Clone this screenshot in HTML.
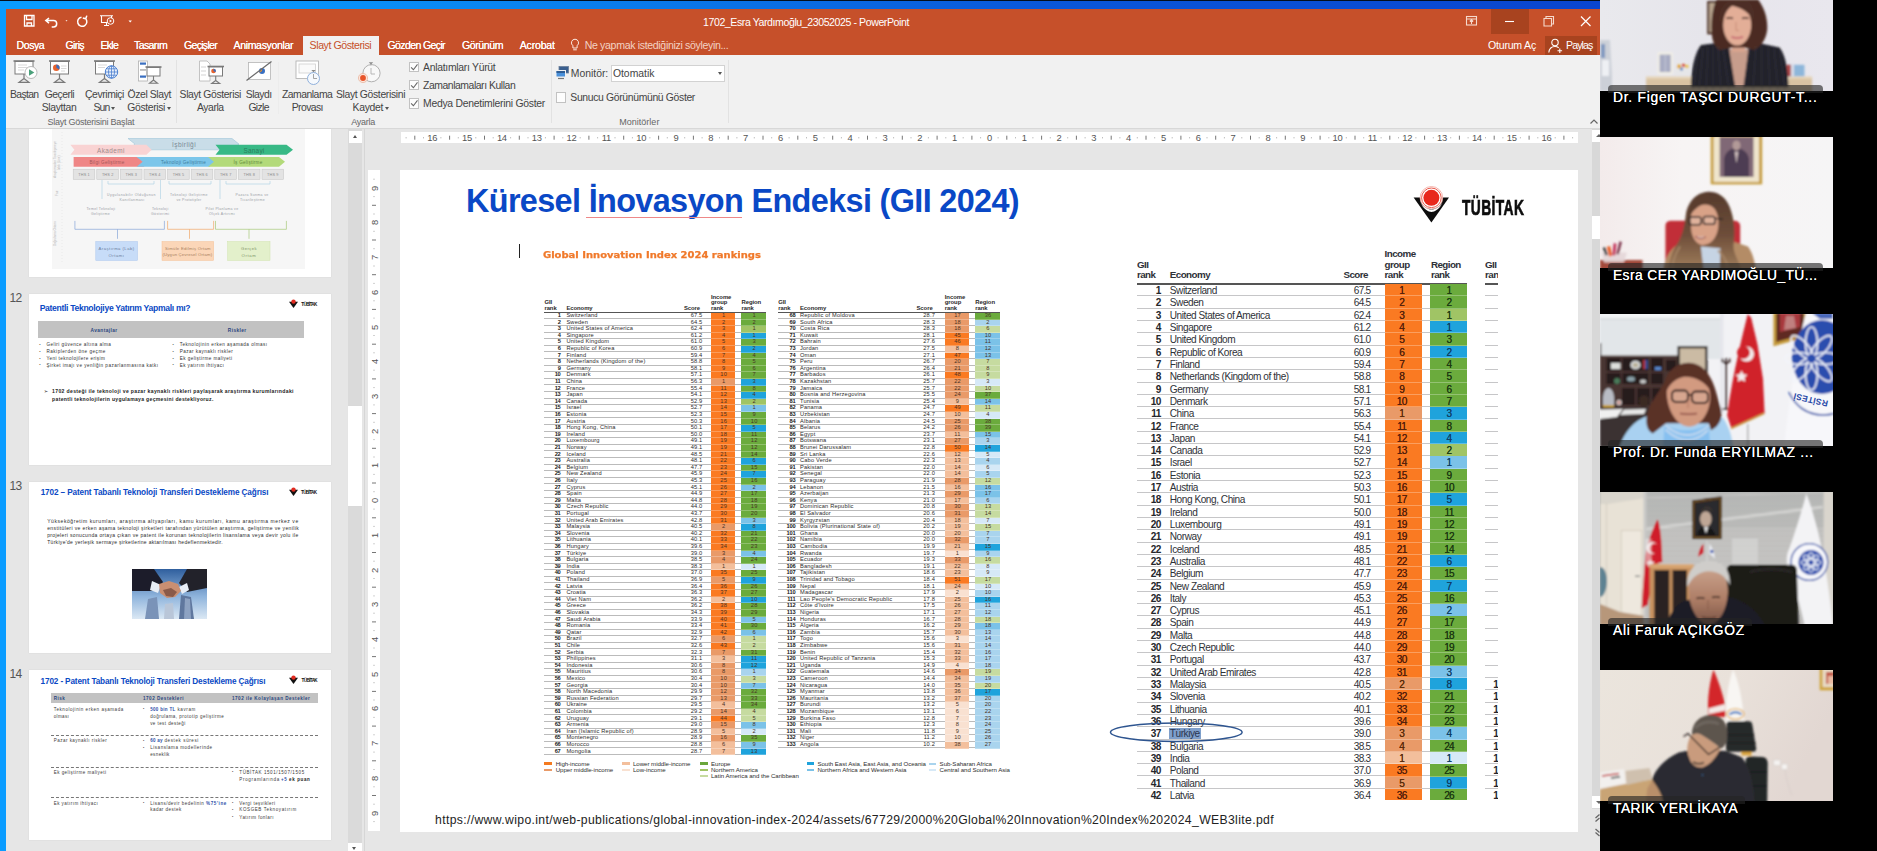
<!DOCTYPE html>
<html lang="tr"><head><meta charset="utf-8"><title>1702_Esra Yardımoğlu_23052025 - PowerPoint</title>
<style>
html,body{margin:0;padding:0}
body{width:1877px;height:851px;overflow:hidden;background:#e6e6e6;position:relative;font-family:"Liberation Sans",sans-serif;}
#root{position:absolute;left:0;top:0;width:1877px;height:851px;overflow:hidden;background:#e6e6e6}
#root div,#root span,#root svg,#root b,#root i{position:absolute;white-space:nowrap}
#root svg{overflow:visible}
#root svg text{white-space:pre}
.st p,.bt p{position:absolute;left:0;right:0;margin:0;box-sizing:border-box}
.st p{height:6.6px;border-bottom:0.7px solid rgba(120,120,120,.5);font-size:5.7px;line-height:5.8px;color:#2b2b2b;letter-spacing:0.17px}
.st p b{color:#1a1a1a;letter-spacing:-0.2px}
.st p *,.bt p *{position:absolute;top:0;white-space:nowrap;text-decoration:none}
.st u{width:24.4px;height:6.7px;border-bottom:0.6px solid rgba(255,255,255,.25);text-align:center;color:#4a3326;padding-left:1px;box-sizing:border-box}
#root .sh{font-size:5.9px;line-height:6px;color:#2a2a2a;letter-spacing:-0.05px}
#root .hl{left:0;right:0;height:0.9px;background:#555}
.bt p{height:12.31px;border-bottom:1.1px solid rgba(120,120,125,.42);font-size:10.1px;line-height:13.9px;color:#2f3238;letter-spacing:-0.46px}
.bt p span+span{letter-spacing:-0.8px}
.bt p b{color:#24262b;letter-spacing:-0.7px}
.bt u{width:37.3px;height:12.4px;box-sizing:border-box;border-bottom:1.1px solid rgba(255,255,255,.28);text-shadow:0 0 .35px currentColor;text-align:center;color:#5a2a08;letter-spacing:-0.7px}
.bt u.EUR,.bt u.NAC,.bt u.LCN{color:#1d3a12}.bt u.SEAO,.bt u.NAWA,.bt u.SSF,.bt u.CSA{color:#0f3f66}
.bt mark{position:static !important;background:#7f9fcb;color:#2a3550;padding:0 1.2px 0 0.5px;margin-left:-0.5px}
#root .bh{font-size:9.8px;line-height:12px;color:#2e3138;letter-spacing:-0.55px}
.bt u.HI,.bt u.UM,.bt u.LM,.bt u.LI{padding-right:3px}.bt u.HI{color:#54200a}
.HI{background:#fa7a22}.UM{background:#e99a68}.LM{background:#f3bf9c}.LI{background:#f9e1d1}
.EUR{background:#6bab3d}.NAC{background:#a0c465}.LCN{background:#c6dba0}.SEAO{background:#1fa3dc}.NAWA{background:#7bc2e8}.SSF{background:#a9d4ee}.CSA{background:#d6e9f7}
</style></head>
<body><div id="root">
<!-- chrome -->
<div style="left:0.0px;top:0.0px;width:1600.0px;height:9.0px;background:linear-gradient(90deg,#0a9cff 0%,#0a9cff 12%,#0a7aea 40%,#0a57d9 65%,#0a45cf 100%);"></div>
<div style="left:0.0px;top:0.0px;width:6.0px;height:851.0px;background:#0a9cff;"></div>
<div style="left:0.0px;top:0.0px;width:1600.0px;height:1.2px;background:#05101e;"></div>
<div style="left:6.0px;top:8.5px;width:1594.0px;height:46.0px;background:#c6502a;"></div>
<svg style="left:20px;top:12px" width="120" height="20" viewBox="0 0 120 20" fill="none" stroke="#fff" stroke-width="1.3">
<path d="M4.5 3.5h9.5v10.5h-9.5z M6.5 3.5v4h5.5v-4 M7 14v-3h4.5v3" />
<path d="M29 6l-3.2 2.6 3.2 2.6 M26 8.6h7.5a3.2 3.2 0 0 1 0 6.4h-1.8" stroke-width="1.5"/>
<path d="M45.5 8.2h2l-1 1.2z" fill="#fff" stroke="none"/>
<path d="M61.5 5.2a4.6 4.6 0 1 0 4 1.3 M66.8 3.6l-1 3.2-3-0.8" stroke-width="1.5"/>
<path d="M80 3.8h13 M81.5 4v6.5h10v-6.5 M86.5 10.5v2.5 M84 13.5h5" stroke-width="1.1"/>
<circle cx="90.5" cy="9" r="3.3" fill="#c6502a" stroke-width="1"/><path d="M89.6 7.5l2.4 1.5-2.4 1.5z" fill="#fff" stroke="none"/>
<path d="M108.5 8.6h3.4l-1.7 1.9z" fill="#fff" stroke="none"/>
</svg>
<span style="left:703.0px;top:15.8px;font-size:10.6px;line-height:12.7px;color:#fff;letter-spacing:-0.43px;">1702_Esra Yardımoğlu_23052025 - PowerPoint</span>
<div style="left:1491.0px;top:8.5px;width:38.0px;height:25.0px;background:#a8431f;"></div>
<svg style="left:1460px;top:10px" width="140" height="24" viewBox="0 0 140 24" fill="none" stroke="#f6d9cc" stroke-width="1.1">
<rect x="6.500" y="6.500" width="10" height="8.500"/><path d="M6.500 9h10 M11.500 14v-4 M9.800 11.500l1.700-1.700 1.700 1.700"/>
<path d="M45 11.500h9" stroke="#fff"/>
<path d="M84 8.500h7.500v7.500h-7.500z M86 8.500v-2h7.500v7.500h-2"/>
<path d="M121 6.500l9.500 9.500 M130.500 6.500l-9.500 9.500" stroke="#fff" stroke-width="1.2"/>
</svg>
<span style="left:16.6px;top:39.2px;font-size:10.6px;line-height:12.7px;color:#fff;letter-spacing:-0.47px;text-shadow:0 0 0.400px #fff;">Dosya</span>
<span style="left:65.5px;top:39.2px;font-size:10.6px;line-height:12.7px;color:#fff;letter-spacing:-0.66px;text-shadow:0 0 0.400px #fff;">Giriş</span>
<span style="left:100.6px;top:39.2px;font-size:10.6px;line-height:12.7px;color:#fff;letter-spacing:-0.80px;text-shadow:0 0 0.400px #fff;">Ekle</span>
<span style="left:134.0px;top:39.2px;font-size:10.6px;line-height:12.7px;color:#fff;letter-spacing:-0.63px;text-shadow:0 0 0.400px #fff;">Tasarım</span>
<span style="left:184.0px;top:39.2px;font-size:10.6px;line-height:12.7px;color:#fff;letter-spacing:-0.73px;text-shadow:0 0 0.400px #fff;">Geçişler</span>
<span style="left:233.5px;top:39.2px;font-size:10.6px;line-height:12.7px;color:#fff;letter-spacing:-0.38px;text-shadow:0 0 0.400px #fff;">Animasyonlar</span>
<div style="left:302.5px;top:35.5px;width:76.5px;height:19.5px;background:#f1f1f1;"></div>
<span style="left:309.6px;top:39.2px;font-size:10.6px;line-height:12.7px;color:#c6502a;letter-spacing:-0.44px;">Slayt Gösterisi</span>
<span style="left:387.5px;top:39.2px;font-size:10.6px;line-height:12.7px;color:#fff;letter-spacing:-0.66px;text-shadow:0 0 0.400px #fff;">Gözden Geçir</span>
<span style="left:462.0px;top:39.2px;font-size:10.6px;line-height:12.7px;color:#fff;letter-spacing:-0.45px;text-shadow:0 0 0.400px #fff;">Görünüm</span>
<span style="left:519.7px;top:39.2px;font-size:10.6px;line-height:12.7px;color:#fff;letter-spacing:-0.20px;text-shadow:0 0 0.400px #fff;">Acrobat</span>
<svg style="left:568px;top:37px" width="14" height="17" viewBox="0 0 14 17" fill="none" stroke="#fbe9e1" stroke-width="1"><path d="M7 2.200a3.600 3.600 0 0 1 2.100 6.500v2.300h-4.200v-2.300a3.600 3.600 0 0 1 2.100-6.500z M5.200 12.800h3.600"/></svg>
<span style="left:584.7px;top:39.2px;font-size:10.6px;line-height:12.7px;color:#f3d2c4;letter-spacing:-0.35px;">Ne yapmak istediğinizi söyleyin...</span>
<span style="left:1488.0px;top:39.2px;font-size:10.6px;line-height:12.7px;color:#fff;letter-spacing:-0.23px;">Oturum Aç</span>
<div style="left:1545.0px;top:36.0px;width:52.0px;height:18.5px;background:#a8431f;"></div>
<svg style="left:1547px;top:37px" width="18" height="17" viewBox="0 0 18 17" fill="none" stroke="#fff" stroke-width="1.1"><circle cx="8" cy="5.500" r="3.200"/><path d="M1.800 15.500c0.500-4 3-6 6.200-6 1.500 0 2.700 0.400 3.700 1.200 M12.800 11.500v4.500 M10.500 13.800h4.600"/></svg>
<span style="left:1566.0px;top:39.2px;font-size:10.6px;line-height:12.7px;color:#fff;letter-spacing:-0.90px;">Paylaş</span>
<div style="left:6.0px;top:54.5px;width:1594.0px;height:74.0px;background:#f1f1f1;"></div>
<div style="left:6.0px;top:128.0px;width:1594.0px;height:1.0px;background:#d8d8d8;"></div>
<span style="left:10.0px;top:88.8px;font-size:10.4px;line-height:12.5px;color:#444;letter-spacing:-0.66px;">Baştan</span>
<span style="left:44.7px;top:88.8px;font-size:10.4px;line-height:12.5px;color:#444;letter-spacing:-0.52px;">Geçerli</span>
<span style="left:41.8px;top:102.1px;font-size:10.4px;line-height:12.5px;color:#444;letter-spacing:-0.36px;">Slayttan</span>
<span style="left:85.0px;top:88.8px;font-size:10.4px;line-height:12.5px;color:#444;letter-spacing:-0.42px;">Çevrimiçi</span>
<span style="left:93.5px;top:102.1px;font-size:10.4px;line-height:12.5px;color:#444;letter-spacing:-0.83px;">Sun</span>
<span style="left:127.5px;top:88.8px;font-size:10.4px;line-height:12.5px;color:#444;letter-spacing:-0.39px;">Özel Slayt</span>
<span style="left:127.3px;top:102.1px;font-size:10.4px;line-height:12.5px;color:#444;letter-spacing:-0.37px;">Gösterisi</span>
<span style="left:179.6px;top:88.8px;font-size:10.4px;line-height:12.5px;color:#444;letter-spacing:-0.38px;">Slayt Gösterisi</span>
<span style="left:196.9px;top:102.1px;font-size:10.4px;line-height:12.5px;color:#444;letter-spacing:-0.41px;">Ayarla</span>
<span style="left:245.7px;top:88.8px;font-size:10.4px;line-height:12.5px;color:#444;letter-spacing:-0.48px;">Slaydı</span>
<span style="left:248.4px;top:102.1px;font-size:10.4px;line-height:12.5px;color:#444;letter-spacing:-0.62px;">Gizle</span>
<span style="left:281.9px;top:88.8px;font-size:10.4px;line-height:12.5px;color:#444;letter-spacing:-0.49px;">Zamanlama</span>
<span style="left:291.7px;top:102.1px;font-size:10.4px;line-height:12.5px;color:#444;letter-spacing:-0.57px;">Provası</span>
<span style="left:335.9px;top:88.8px;font-size:10.4px;line-height:12.5px;color:#444;letter-spacing:-0.34px;">Slayt Gösterisini</span>
<span style="left:352.6px;top:102.1px;font-size:10.4px;line-height:12.5px;color:#444;letter-spacing:-0.33px;">Kaydet</span>
<div style="left:111.3px;top:106.5px;width:0;height:0;border-left:2.6px solid transparent;border-right:2.6px solid transparent;border-top:3px solid #555"></div>
<div style="left:166.6px;top:106.5px;width:0;height:0;border-left:2.6px solid transparent;border-right:2.6px solid transparent;border-top:3px solid #555"></div>
<div style="left:384.6px;top:106.5px;width:0;height:0;border-left:2.6px solid transparent;border-right:2.6px solid transparent;border-top:3px solid #555"></div>
<span style="left:47.4px;top:116.6px;font-size:9.0px;line-height:10.8px;color:#666;letter-spacing:-0.24px;">Slayt Gösterisini Başlat</span>
<span style="left:351.3px;top:116.6px;font-size:9.0px;line-height:10.8px;color:#666;letter-spacing:-0.27px;">Ayarla</span>
<span style="left:619.2px;top:116.6px;font-size:9.0px;line-height:10.8px;color:#666;letter-spacing:0.02px;">Monitörler</span>
<div style="left:175.5px;top:60.0px;width:1.0px;height:63.0px;background:#e2e2e2;"></div>
<div style="left:551.3px;top:60.0px;width:1.0px;height:63.0px;background:#e2e2e2;"></div>
<div style="left:728.0px;top:60.0px;width:1.0px;height:63.0px;background:#e2e2e2;"></div>
<div style="left:278.0px;top:62.0px;width:1.0px;height:52.0px;background:#ececec;"></div>
<div style="left:408.5px;top:61.8px;width:8.4px;height:8.4px;background:#fdfdfd;border:1px solid #c2c2c2;box-sizing:content-box;"></div>
<svg style="left:408.500px;top:62.0px" width="10.500" height="10.500" viewBox="0 0 11 11" fill="none" stroke="#666" stroke-width="1.1"><path d="M2.200 5.600l2.400 2.500 4.300-5.600"/></svg>
<span style="left:423.0px;top:61.7px;font-size:10.4px;line-height:12.5px;color:#444;letter-spacing:-0.28px;">Anlatımları Yürüt</span>
<div style="left:408.5px;top:79.8px;width:8.4px;height:8.4px;background:#fdfdfd;border:1px solid #c2c2c2;box-sizing:content-box;"></div>
<svg style="left:408.500px;top:80.0px" width="10.500" height="10.500" viewBox="0 0 11 11" fill="none" stroke="#666" stroke-width="1.1"><path d="M2.200 5.600l2.400 2.500 4.300-5.600"/></svg>
<span style="left:423.0px;top:79.7px;font-size:10.4px;line-height:12.5px;color:#444;letter-spacing:-0.44px;">Zamanlamaları Kullan</span>
<div style="left:408.5px;top:98.2px;width:8.4px;height:8.4px;background:#fdfdfd;border:1px solid #c2c2c2;box-sizing:content-box;"></div>
<svg style="left:408.500px;top:98.4px" width="10.500" height="10.500" viewBox="0 0 11 11" fill="none" stroke="#666" stroke-width="1.1"><path d="M2.200 5.600l2.400 2.500 4.300-5.600"/></svg>
<span style="left:423.0px;top:98.1px;font-size:10.4px;line-height:12.5px;color:#444;letter-spacing:-0.26px;">Medya Denetimlerini Göster</span>
<svg style="left:555px;top:65px" width="15" height="15" viewBox="0 0 15 15"><rect x="4" y="1.500" width="9.500" height="6.500" fill="#3a5f8f" stroke="#6b7f99" stroke-width="0.8"/><rect x="1" y="5.500" width="9.500" height="6.500" fill="#4a90d9" stroke="#f1f1f1" stroke-width="1"/><rect x="1.500" y="6" width="8.500" height="2" fill="#2f5d94"/><path d="M3 13.500h6" stroke="#777" stroke-width="1.200"/></svg>
<span style="left:570.8px;top:67.8px;font-size:10.4px;line-height:12.5px;color:#444;letter-spacing:-0.01px;">Monitör:</span>
<div style="left:610.5px;top:65.0px;width:114.0px;height:16.5px;background:#fff;border:1px solid #d2d2d2;box-sizing:border-box;"></div>
<span style="left:612.9px;top:67.8px;font-size:10.4px;line-height:12.5px;color:#444;letter-spacing:-0.00px;">Otomatik</span>
<div style="left:718.3px;top:71.500px;width:0;height:0;border-left:2.6px solid transparent;border-right:2.6px solid transparent;border-top:3px solid #555"></div>
<div style="left:556.2px;top:92.3px;width:8.2px;height:8.4px;background:#fdfdfd;border:1px solid #c2c2c2;box-sizing:content-box;"></div>
<span style="left:570.3px;top:92.2px;font-size:10.4px;line-height:12.5px;color:#444;letter-spacing:-0.34px;">Sunucu Görünümünü Göster</span>
<svg style="left:1588px;top:117px" width="12" height="10" viewBox="0 0 12 10" fill="none" stroke="#666" stroke-width="1.200"><path d="M2.500 6.500l3.500-3.500 3.500 3.500"/></svg>
<svg style="left:6px;top:56px" width="420" height="34" viewBox="6 56 420 34" fill="none"><path d="M13.5 61.0h21.0" stroke="#7a7a7a" stroke-width="1.600"/><rect x="15.0" y="61.5" width="18.0" height="12.5" fill="#fff" stroke="#7a7a7a" stroke-width="1"/><path d="M24.0 74.0v5.500 M24.0 78.5l-5 3.800h10z" stroke="#7a7a7a" stroke-width="1.200" fill="#e8e8e8"/><path d="M18 65h9 M18 67.500h9 M18 70h6" stroke="#cfcfcf" stroke-width="0.800"/><circle cx="31" cy="72.500" r="6" fill="#fff" stroke="#a9a9a9" stroke-width="0.800"/><path d="M29 69.200l5.300 3.300-5.300 3.300z" fill="#4aa07a"/><path d="M49.0 61.0h21.0" stroke="#7a7a7a" stroke-width="1.600"/><rect x="50.5" y="61.5" width="18.0" height="12.5" fill="#fff" stroke="#7a7a7a" stroke-width="1"/><path d="M59.5 74.0v5.500 M59.5 78.5l-5 3.800h10z" stroke="#7a7a7a" stroke-width="1.200" fill="#e8e8e8"/><circle cx="56.300" cy="67.800" r="3.300" fill="#e8622c"/><path d="M56.300 67.800v-3.300a3.300 3.300 0 0 1 2.800 5z" fill="#3a6fc0"/><path d="M61 66h5.500 M61 68.500h5.500 M61 71h4" stroke="#cfcfcf" stroke-width="0.800"/><path d="M94.0 61.0h21.0" stroke="#7a7a7a" stroke-width="1.600"/><rect x="95.5" y="61.5" width="18.0" height="12.5" fill="#fff" stroke="#7a7a7a" stroke-width="1"/><path d="M104.5 74.0v5.500 M104.5 78.5l-5 3.800h10z" stroke="#7a7a7a" stroke-width="1.200" fill="#e8e8e8"/><path d="M98 65h9 M98 67.500h7" stroke="#cfcfcf" stroke-width="0.800"/><circle cx="111.500" cy="72" r="6.200" fill="#eaf1fb" stroke="#4a7fd0" stroke-width="1"/><path d="M105.300 72h12.400 M111.500 65.800v12.400 M106.500 68.800h10 M106.500 75.200h10" stroke="#4a7fd0" stroke-width="0.800"/><ellipse cx="111.500" cy="72" rx="3" ry="6.200" stroke="#4a7fd0" stroke-width="0.800"/><rect x="138.500" y="61" width="9" height="20" fill="#fff" stroke="#b0b0b0" stroke-width="0.800"/><rect x="140" y="62.500" width="6" height="2.200" fill="#3a6fc0"/><rect x="140" y="69" width="6" height="1.800" fill="#bbb"/><rect x="140" y="75.500" width="6" height="2.200" fill="#3a6fc0"/><path d="M145.5 67.0h16.0" stroke="#7a7a7a" stroke-width="1.600"/><rect x="147.0" y="67.5" width="13.0" height="8.5" fill="#fff" stroke="#7a7a7a" stroke-width="1"/><path d="M153.500 76v5 M153.500 80l-4 3.200h8z" stroke="#7a7a7a" stroke-width="1.100" fill="#e8e8e8"/><path d="M199.500 61h7.500l3 3v17h-10.500z" fill="#fff" stroke="#b5b5b5" stroke-width="0.800"/><path d="M201 67h5 M201 71h5 M201 75h5" stroke="#c8c8c8" stroke-width="0.800"/><path d="M207.5 66.5h16.5" stroke="#7a7a7a" stroke-width="1.600"/><rect x="209.0" y="67.0" width="13.5" height="9.0" fill="#fff" stroke="#7a7a7a" stroke-width="1"/><circle cx="213.500" cy="71" r="2.300" fill="#e8622c"/><path d="M213.500 71v-2.300a2.300 2.300 0 0 1 2 3.500z" fill="#3a6fc0"/><path d="M215.700 76v5 M215.700 80.500l-4 3h8z" stroke="#7a7a7a" stroke-width="1.100" fill="#e8e8e8"/><rect x="248.500" y="62.500" width="22" height="17" fill="#fff" stroke="#b5b5b5" stroke-width="0.800"/><circle cx="262" cy="71" r="3" fill="#3a6fc0"/><path d="M259 73l3-2v-3z" fill="#e8922c"/><path d="M246.500 80.500l25-19" stroke="#6a6a6a" stroke-width="1.200"/><rect x="296" y="61" width="22.500" height="17.500" fill="#fff" stroke="#b5b5b5" stroke-width="0.900"/><rect x="299" y="64" width="16.500" height="9" fill="#fafafa" stroke="#cfcfcf" stroke-width="0.800"/><circle cx="313.500" cy="78.500" r="6" fill="#f6f9fd" stroke="#8fb0dc" stroke-width="1"/><path d="M313.500 74v4.500h3.500" stroke="#9a9a9a" stroke-width="0.900"/><path d="M311.300 70h4.400l-2.200 2.200z" fill="#888"/><circle cx="371.500" cy="73.200" r="8.600" fill="#f8f8f8" stroke="#a8a8a8" stroke-width="0.900"/><path d="M371 68v6h4" stroke="#b0b0b0" stroke-width="0.900"/><path d="M368.800 62.300h4.400l-2.200 2.200z" fill="#888"/><path d="M371 63v2.500" stroke="#999" stroke-width="0.800"/><circle cx="363" cy="78" r="4.600" fill="#fbe4da" stroke="#e9b7a2" stroke-width="0.800"/><circle cx="363" cy="78" r="2.900" fill="#e8552a"/></svg>
<!-- thumbs -->
<div style="left:6.0px;top:129.0px;width:342.0px;height:722.0px;background:#e6e6e6;"></div>
<div style="left:348.0px;top:129.0px;width:13.5px;height:722.0px;background:#dadada;"></div>
<div style="left:348.5px;top:130.6px;width:13.0px;height:12.0px;background:#fff;"></div>
<div style="left:352.6px;top:134.800px;width:0;height:0;border-left:2.6px solid transparent;border-right:2.6px solid transparent;border-bottom:3px solid #555"></div>
<div style="left:348.0px;top:406.3px;width:13.5px;height:99.5px;background:#fff;box-shadow:0 0 0.500px #bbb;"></div>
<div style="left:348.0px;top:843.0px;width:13.5px;height:8.0px;background:#fff;"></div>
<div style="left:352.4px;top:846.800px;width:0;height:0;border-left:2.8px solid transparent;border-right:2.8px solid transparent;border-top:3.200px solid #555"></div>
<div style="left:364.0px;top:129.0px;width:1.0px;height:722.0px;background:#d6d6d6;"></div>
<span style="left:9.6px;top:291.0px;font-size:12.0px;line-height:14.4px;color:#555;letter-spacing:-0.67px;">12</span>
<span style="left:9.6px;top:479.3px;font-size:12.0px;line-height:14.4px;color:#555;letter-spacing:-0.67px;">13</span>
<span style="left:9.6px;top:667.4px;font-size:12.0px;line-height:14.4px;color:#555;letter-spacing:-0.67px;">14</span>
<div style="left:29.0px;top:129.0px;width:302.2px;height:148.0px;background:#fff;box-shadow:0 0 1px #c8c8c8;"></div>
<div style="left:52.0px;top:129.0px;width:253.0px;height:140.0px;background:#f6f6f6;"></div>
<svg style="left:29px;top:129px" width="302" height="148" viewBox="29 129 302 148"><path d="M128 138.500h104l7 5.600-7 5.700h-104l7-5.700z" fill="#c9dde8" stroke="#9ec4d8" stroke-width="0.600"/><path d="M70.400 144.700h76l5.200 5-5.200 5h-76l4-5z" fill="#f9d3d3"/><path d="M215.500 144.700h71l6.500 5-6.500 5h-71l4-5z" fill="#38b986"/><path d="M73.600 157h70l6.100 4.800-6.100 4.900h-70z" fill="#ef8686"/><path d="M136.600 157h73l5.900 4.800-5.900 4.900h-73l6-4.900z" fill="#7cc6ea"/><path d="M208 157h71l6 4.800-6 4.900h-71l6-4.900z" fill="#b3da7a"/><rect x="73.2" y="169.200" width="21.600" height="10.300" fill="#e3e3e3" stroke="#c4c4c4" stroke-width="0.500"/><rect x="96.8" y="169.200" width="21.600" height="10.300" fill="#e3e3e3" stroke="#c4c4c4" stroke-width="0.500"/><rect x="120.4" y="169.200" width="21.600" height="10.300" fill="#e3e3e3" stroke="#c4c4c4" stroke-width="0.500"/><rect x="144.0" y="169.200" width="21.600" height="10.300" fill="#e3e3e3" stroke="#c4c4c4" stroke-width="0.500"/><rect x="167.6" y="169.200" width="21.600" height="10.300" fill="#e3e3e3" stroke="#c4c4c4" stroke-width="0.500"/><rect x="191.2" y="169.200" width="21.600" height="10.300" fill="#e3e3e3" stroke="#c4c4c4" stroke-width="0.500"/><rect x="214.8" y="169.200" width="21.600" height="10.300" fill="#e3e3e3" stroke="#c4c4c4" stroke-width="0.500"/><rect x="238.4" y="169.200" width="21.600" height="10.300" fill="#e3e3e3" stroke="#c4c4c4" stroke-width="0.500"/><rect x="262.0" y="169.200" width="21.600" height="10.300" fill="#e3e3e3" stroke="#c4c4c4" stroke-width="0.500"/><path d="M74.900 220.900v8.400h89.500v-8.400 M117.500 229.300v9.500" fill="none" stroke="#86a6d8" stroke-width="0.700"/><path d="M167.600 220.900v8.400h46v-8.400 M189.500 229.300v9.500" fill="none" stroke="#f0a868" stroke-width="0.700"/><path d="M215.500 220.900v8.400h70.900v-8.400 M249 229.300v9.500" fill="none" stroke="#a8c878" stroke-width="0.700"/><path d="M102 180v19 M160.500 180v19 M220 180v19 M108 181v3h46v-3 M169 181v3h42v-3 M226 181v3h44v-3" fill="none" stroke="#a9d0e4" stroke-width="0.600"/><rect x="95.800" y="241.600" width="41.700" height="18.800" fill="#c7dcf8" stroke="#a9c6ee" stroke-width="0.500"/><rect x="162" y="241.600" width="51.600" height="18.800" fill="#fbd6b8" stroke="#f5bf94" stroke-width="0.500"/><rect x="227.700" y="241.600" width="42.300" height="18.800" fill="#e3f0cb" stroke="#cfe3ac" stroke-width="0.500"/><path d="M62 132v130" stroke="#dcdcdc" stroke-width="0.500" stroke-dasharray="1 2"/></svg>
<span style="left:172.0px;top:140.6px;font-size:6.6px;line-height:7.9px;color:#7b8b96;letter-spacing:0.39px;">İşbirliği</span>
<span style="left:97.0px;top:146.8px;font-size:6.4px;line-height:7.7px;color:#a08c8c;letter-spacing:0.44px;">Akademi</span>
<span style="left:243.5px;top:146.6px;font-size:6.4px;line-height:7.7px;color:#2b7e5c;letter-spacing:0.24px;">Sanayi</span>
<span style="left:89.5px;top:159.8px;font-size:4.6px;line-height:5.5px;color:#a45858;letter-spacing:0.27px;">Bilgi Geliştirme</span>
<span style="left:161.0px;top:159.8px;font-size:4.6px;line-height:5.5px;color:#3f7ea0;letter-spacing:0.26px;">Teknoloji Geliştirme</span>
<span style="left:233.5px;top:159.8px;font-size:4.6px;line-height:5.5px;color:#5f8a3a;letter-spacing:0.27px;">İş Geliştirme</span>
<span style="left:78.3px;top:172.8px;font-size:3.8px;line-height:4.6px;color:#8a8a8a;letter-spacing:0.15px;">THS 1</span>
<span style="left:101.9px;top:172.8px;font-size:3.8px;line-height:4.6px;color:#8a8a8a;letter-spacing:0.15px;">THS 2</span>
<span style="left:125.5px;top:172.8px;font-size:3.8px;line-height:4.6px;color:#8a8a8a;letter-spacing:0.15px;">THS 3</span>
<span style="left:149.1px;top:172.8px;font-size:3.8px;line-height:4.6px;color:#8a8a8a;letter-spacing:0.15px;">THS 4</span>
<span style="left:172.7px;top:172.8px;font-size:3.8px;line-height:4.6px;color:#8a8a8a;letter-spacing:0.15px;">THS 5</span>
<span style="left:196.3px;top:172.8px;font-size:3.8px;line-height:4.6px;color:#8a8a8a;letter-spacing:0.15px;">THS 6</span>
<span style="left:219.9px;top:172.8px;font-size:3.8px;line-height:4.6px;color:#8a8a8a;letter-spacing:0.15px;">THS 7</span>
<span style="left:243.5px;top:172.8px;font-size:3.8px;line-height:4.6px;color:#8a8a8a;letter-spacing:0.15px;">THS 8</span>
<span style="left:267.1px;top:172.8px;font-size:3.8px;line-height:4.6px;color:#8a8a8a;letter-spacing:0.15px;">THS 9</span>
<span style="left:107.0px;top:192.7px;font-size:3.5px;line-height:4.2px;color:#9aa0a6;letter-spacing:0.46px;">Uygulanabilir Olduğunun</span>
<span style="left:119.5px;top:198.0px;font-size:3.5px;line-height:4.2px;color:#9aa0a6;letter-spacing:0.38px;">Kanıtlanması</span>
<span style="left:170.0px;top:192.7px;font-size:3.5px;line-height:4.2px;color:#9aa0a6;letter-spacing:0.38px;">Teknoloji Geliştirme</span>
<span style="left:176.5px;top:198.0px;font-size:3.5px;line-height:4.2px;color:#9aa0a6;letter-spacing:0.31px;">ve Prototipler</span>
<span style="left:235.5px;top:192.7px;font-size:3.5px;line-height:4.2px;color:#9aa0a6;letter-spacing:0.35px;">Pazara Sunma ve</span>
<span style="left:240.0px;top:198.0px;font-size:3.5px;line-height:4.2px;color:#9aa0a6;letter-spacing:0.31px;">Ticarileştirme</span>
<span style="left:86.5px;top:206.5px;font-size:3.5px;line-height:4.2px;color:#9aa0a6;letter-spacing:0.34px;">Temel Teknoloji</span>
<span style="left:91.0px;top:211.7px;font-size:3.5px;line-height:4.2px;color:#9aa0a6;letter-spacing:0.32px;">Geliştirme</span>
<span style="left:152.0px;top:206.5px;font-size:3.5px;line-height:4.2px;color:#9aa0a6;letter-spacing:0.32px;">Teknoloji</span>
<span style="left:151.0px;top:211.7px;font-size:3.5px;line-height:4.2px;color:#9aa0a6;letter-spacing:0.39px;">Gösterimi</span>
<span style="left:205.5px;top:206.5px;font-size:3.5px;line-height:4.2px;color:#9aa0a6;letter-spacing:0.35px;">Pilot Planlama ve</span>
<span style="left:209.0px;top:211.7px;font-size:3.5px;line-height:4.2px;color:#9aa0a6;letter-spacing:0.34px;">Ölçek Artırımı</span>
<span style="left:98.6px;top:246.3px;font-size:4.2px;line-height:5.0px;color:#6b7f9e;letter-spacing:0.46px;">Araştırma (Lab)</span>
<span style="left:108.5px;top:252.6px;font-size:4.2px;line-height:5.0px;color:#6b7f9e;letter-spacing:0.53px;">Ortamı</span>
<span style="left:165.0px;top:246.1px;font-size:4.2px;line-height:5.0px;color:#a8815e;letter-spacing:0.28px;">Simüle Edilmiş Ortam</span>
<span style="left:162.5px;top:252.1px;font-size:4.2px;line-height:5.0px;color:#a8815e;letter-spacing:0.20px;">(Uygun Çevresel Ortam)</span>
<span style="left:241.0px;top:246.3px;font-size:4.2px;line-height:5.0px;color:#7f956a;letter-spacing:0.41px;">Gerçek</span>
<span style="left:241.5px;top:252.6px;font-size:4.2px;line-height:5.0px;color:#7f956a;letter-spacing:0.67px;">Ortam</span>
<span style="left:52.500px;top:246px;font-size:3.200px;line-height:4px;color:#b5b5b5;transform:rotate(-90deg);transform-origin:0 0;letter-spacing:-0.100px">Doğrulama Ortamı</span>
<span style="left:52.500px;top:178px;font-size:3.200px;line-height:4px;color:#b5b5b5;transform:rotate(-90deg);transform-origin:0 0;letter-spacing:-0.100px">Araştırmadan Ticarileşmeye</span>
<span style="left:56.500px;top:170px;font-size:3.200px;line-height:4px;color:#b5b5b5;transform:rotate(-90deg);transform-origin:0 0;letter-spacing:-0.100px">İzlek (Line)</span>
<span style="left:54.500px;top:196px;font-size:3.200px;line-height:4px;color:#b5b5b5;transform:rotate(-90deg);transform-origin:0 0">Faz</span>
<div style="left:29.0px;top:294.2px;width:302.2px;height:170.8px;background:#fff;box-shadow:0 0 1px #c8c8c8;"></div>
<span style="left:39.7px;top:303.2px;font-size:8.6px;line-height:10.3px;color:#0a49c4;font-weight:bold;letter-spacing:-0.32px;">Patentli Teknolojiye Yatırım Yapmalı mı?</span>
<svg style="left:288.6px;top:299.0px" width="10" height="10" viewBox="0 0 10 10"><path d="M0 2.800h9l-4.500 6.200z" fill="#111"/><circle cx="4.500" cy="2.600" r="2.200" fill="#e02a20"/></svg><span style="left:301.3px;top:301.6px;font-size:4.6px;line-height:5.5px;color:#111;font-weight:bold;letter-spacing:-0.63px;">TÜBİTAK</span>
<div style="left:37.6px;top:321.0px;width:266.4px;height:17.2px;background:#c2c2c2;"></div>
<span style="left:90.5px;top:328.1px;font-size:4.8px;line-height:5.8px;color:#2b4680;font-weight:bold;letter-spacing:0.40px;">Avantajlar</span>
<span style="left:227.8px;top:328.1px;font-size:4.8px;line-height:5.8px;color:#2b4680;font-weight:bold;letter-spacing:0.40px;">Riskler</span>
<span style="left:39.3px;top:342.7px;font-size:3.6px;line-height:4.3px;color:#444;">•</span>
<span style="left:46.4px;top:342.1px;font-size:4.6px;line-height:5.5px;color:#333;letter-spacing:0.45px;">Geliri güvence altına alma</span>
<span style="left:172.6px;top:342.7px;font-size:3.6px;line-height:4.3px;color:#444;">•</span>
<span style="left:179.7px;top:342.1px;font-size:4.6px;line-height:5.5px;color:#333;letter-spacing:0.49px;">Teknolojinin erken aşamada olması</span>
<span style="left:39.3px;top:349.6px;font-size:3.6px;line-height:4.3px;color:#444;">•</span>
<span style="left:46.4px;top:349.0px;font-size:4.6px;line-height:5.5px;color:#333;letter-spacing:0.52px;">Rakiplerden öne geçme</span>
<span style="left:172.6px;top:349.6px;font-size:3.6px;line-height:4.3px;color:#444;">•</span>
<span style="left:179.7px;top:349.0px;font-size:4.6px;line-height:5.5px;color:#333;letter-spacing:0.45px;">Pazar kaynaklı riskler</span>
<span style="left:39.3px;top:356.5px;font-size:3.6px;line-height:4.3px;color:#444;">•</span>
<span style="left:46.4px;top:355.9px;font-size:4.6px;line-height:5.5px;color:#333;letter-spacing:0.43px;">Yeni teknolojilere erişim</span>
<span style="left:172.6px;top:356.5px;font-size:3.6px;line-height:4.3px;color:#444;">•</span>
<span style="left:179.7px;top:355.9px;font-size:4.6px;line-height:5.5px;color:#333;letter-spacing:0.44px;">Ek geliştirme maliyeti</span>
<span style="left:39.3px;top:363.4px;font-size:3.6px;line-height:4.3px;color:#444;">•</span>
<span style="left:46.4px;top:362.8px;font-size:4.6px;line-height:5.5px;color:#333;letter-spacing:0.48px;">Şirket imajı ve yenliğin pazarlanmasına katkı</span>
<span style="left:172.6px;top:363.4px;font-size:3.6px;line-height:4.3px;color:#444;">•</span>
<span style="left:179.7px;top:362.8px;font-size:4.6px;line-height:5.5px;color:#333;letter-spacing:0.43px;">Ek yatırım ihtiyacı</span>
<span style="left:43.8px;top:388.2px;font-size:5.2px;line-height:6.2px;color:#222;font-family:'DejaVu Sans',sans-serif;">➢</span>
<span style="left:52.1px;top:388.2px;font-size:5.1px;line-height:6.1px;color:#222;font-weight:bold;letter-spacing:0.34px;">1702 desteği ile teknoloji ve pazar kaynaklı riskleri paylaşarak araştırma kurumlarındaki</span>
<span style="left:52.1px;top:396.0px;font-size:5.1px;line-height:6.1px;color:#222;font-weight:bold;letter-spacing:0.30px;">patentli teknolojilerin uygulamaya geçmesini destekliyoruz.</span>
<div style="left:29.0px;top:482.2px;width:302.2px;height:170.6px;background:#fff;box-shadow:0 0 1px #c8c8c8;"></div>
<span style="left:40.7px;top:487.6px;font-size:8.2px;line-height:9.8px;color:#0a49c4;font-weight:bold;letter-spacing:-0.12px;">1702 – Patent Tabanlı Teknoloji Transferi Destekleme Çağrısı</span>
<svg style="left:289.1px;top:487.0px" width="10" height="10" viewBox="0 0 10 10"><path d="M0 2.800h9l-4.500 6.200z" fill="#111"/><circle cx="4.500" cy="2.600" r="2.200" fill="#e02a20"/></svg><span style="left:301.0px;top:489.6px;font-size:4.6px;line-height:5.5px;color:#111;font-weight:bold;letter-spacing:-0.63px;">TÜBİTAK</span>
<span style="left:47.2px;top:518.0px;font-size:5.0px;line-height:6.0px;color:#2a2a2a;letter-spacing:0.57px;">Yükseköğretim kurumları, araştırma altyapıları, kamu kurumları, kamu araştırma merkez ve</span>
<span style="left:47.2px;top:525.0px;font-size:5.0px;line-height:6.0px;color:#2a2a2a;letter-spacing:0.39px;">enstitüleri ve erken aşama teknoloji şirketleri tarafından yürütülen araştırma, geliştirme ve yenilik</span>
<span style="left:47.2px;top:532.1px;font-size:5.0px;line-height:6.0px;color:#2a2a2a;letter-spacing:0.36px;">projeleri sonucunda ortaya çıkan ve patent ile korunan teknolojilerin lisanslama veya devir yolu ile</span>
<span style="left:47.2px;top:539.1px;font-size:5.0px;line-height:6.0px;color:#2a2a2a;letter-spacing:0.31px;">Türkiye'de yerleşik sermaye şirketlerine aktarılması hedeflenmektedir.</span>
<svg style="left:132.400px;top:569.100px" width="75" height="50" viewBox="0 0 75 50"><defs><linearGradient id="sky" x1="0" y1="0" x2="0" y2="1"><stop offset="0" stop-color="#2f5f9e"/><stop offset="0.550" stop-color="#8fb4dc"/><stop offset="1" stop-color="#dbe8f4"/></linearGradient><filter id="b1"><feGaussianBlur stdDeviation="0.600"/></filter><clipPath id="hc"><rect width="75" height="50"/></clipPath></defs><g clip-path="url(#hc)"><rect width="75" height="50" fill="url(#sky)"/><g filter="url(#b1)"><path d="M13 50l3-20 9-2 2 22z" fill="#7a93b8"/><path d="M32 50l1-15 8-1 1 16z" fill="#b9c6d8"/><path d="M47 50l2-24 10 2 3 22z" fill="#5f779e"/><path d="M52 50l1-21 5 1 1 20z" fill="#8da2c2"/><path d="M0 0h22l9 13-7 9-24 0z" fill="#1c1f2a"/><path d="M75 0h-20l-8 14 8 9 20-4z" fill="#20222c"/><path d="M20 12l9 4-3 8-8-3z" fill="#e8eef6"/><path d="M55 14l-8 4 3 7 7-4z" fill="#e8eef6"/><path d="M27 15l10-3 9 3 3 7-6 6-8 1-7-5z" fill="#c98f72"/><path d="M31 21l8-2 6 4-4 5-7-1z" fill="#8a5a48"/></g></g></svg>
<div style="left:29.2px;top:670.1px;width:302.0px;height:170.0px;background:#fff;box-shadow:0 0 1px #c8c8c8;"></div>
<span style="left:40.6px;top:676.5px;font-size:8.2px;line-height:9.8px;color:#0a49c4;font-weight:bold;letter-spacing:-0.14px;">1702 - Patent Tabanlı Teknoloji Transferi Destekleme  Çağrısı</span>
<svg style="left:288.8px;top:675.2px" width="10" height="10" viewBox="0 0 10 10"><path d="M0 2.800h9l-4.500 6.200z" fill="#111"/><circle cx="4.500" cy="2.600" r="2.200" fill="#e02a20"/></svg><span style="left:301.6px;top:677.8px;font-size:4.6px;line-height:5.5px;color:#111;font-weight:bold;letter-spacing:-0.63px;">TÜBİTAK</span>
<div style="left:51.4px;top:693.0px;width:267.1px;height:10.3px;background:#c2c2c2;"></div>
<span style="left:53.7px;top:695.6px;font-size:4.6px;line-height:5.5px;color:#2b4680;font-weight:bold;letter-spacing:0.45px;">Risk</span>
<span style="left:143.0px;top:695.6px;font-size:4.6px;line-height:5.5px;color:#2b4680;font-weight:bold;letter-spacing:0.50px;">1702 Destekleri</span>
<span style="left:232.0px;top:695.6px;font-size:4.6px;line-height:5.5px;color:#2b4680;font-weight:bold;letter-spacing:0.49px;">1702 ile Kolaylaşan Destekler</span>
<span style="left:53.7px;top:706.8px;font-size:4.5px;line-height:5.4px;color:#3a3a3a;letter-spacing:0.55px;">Teknolojinin erken aşamada</span>
<span style="left:53.7px;top:713.5px;font-size:4.5px;line-height:5.4px;color:#3a3a3a;letter-spacing:0.37px;">olması</span>
<span style="left:143.0px;top:707.3px;font-size:3.6px;line-height:4.3px;color:#444;">•</span>
<span style="left:150.2px;top:706.8px;font-size:4.5px;line-height:5.4px;color:#2c4fa8;font-weight:bold;letter-spacing:0.32px;">500 bin TL</span>
<span style="left:177.5px;top:706.8px;font-size:4.5px;line-height:5.4px;color:#3a3a3a;letter-spacing:0.62px;">kavram</span>
<span style="left:150.2px;top:713.5px;font-size:4.5px;line-height:5.4px;color:#3a3a3a;letter-spacing:0.49px;">doğrulama, prototip geliştirme</span>
<span style="left:150.2px;top:720.7px;font-size:4.5px;line-height:5.4px;color:#3a3a3a;letter-spacing:0.43px;">ve test desteği</span>
<span style="left:53.7px;top:738.4px;font-size:4.5px;line-height:5.4px;color:#3a3a3a;letter-spacing:0.49px;">Pazar kaynaklı riskler</span>
<span style="left:143.0px;top:738.9px;font-size:3.6px;line-height:4.3px;color:#444;">•</span>
<span style="left:150.2px;top:738.4px;font-size:4.5px;line-height:5.4px;color:#2c4fa8;font-weight:bold;letter-spacing:0.25px;">60 ay</span>
<span style="left:164.5px;top:738.4px;font-size:4.5px;line-height:5.4px;color:#3a3a3a;letter-spacing:0.61px;">destek süresi</span>
<span style="left:143.0px;top:745.8px;font-size:3.6px;line-height:4.3px;color:#444;">•</span>
<span style="left:150.2px;top:745.3px;font-size:4.5px;line-height:5.4px;color:#3a3a3a;letter-spacing:0.55px;">Lisanslama modellerinde</span>
<span style="left:150.2px;top:752.1px;font-size:4.5px;line-height:5.4px;color:#3a3a3a;letter-spacing:0.41px;">esneklik</span>
<span style="left:53.7px;top:769.6px;font-size:4.5px;line-height:5.4px;color:#3a3a3a;letter-spacing:0.48px;">Ek geliştirme maliyeti</span>
<span style="left:232.0px;top:770.1px;font-size:3.6px;line-height:4.3px;color:#444;">•</span>
<span style="left:239.3px;top:769.6px;font-size:4.5px;line-height:5.4px;color:#3a3a3a;letter-spacing:0.59px;">TÜBİTAK 1501/1507/1505</span>
<span style="left:239.3px;top:776.6px;font-size:4.5px;line-height:5.4px;color:#3a3a3a;letter-spacing:0.68px;">Programlarında</span>
<span style="left:281.0px;top:776.6px;font-size:4.5px;line-height:5.4px;color:#2c4fa8;font-weight:bold;letter-spacing:0.68px;">+5</span>
<span style="left:289.0px;top:776.6px;font-size:4.5px;line-height:5.4px;color:#222;font-weight:bold;letter-spacing:0.64px;">ek puan</span>
<span style="left:53.7px;top:800.6px;font-size:4.5px;line-height:5.4px;color:#3a3a3a;letter-spacing:0.47px;">Ek yatırım ihtiyacı</span>
<span style="left:143.0px;top:801.1px;font-size:3.6px;line-height:4.3px;color:#444;">•</span>
<span style="left:150.2px;top:800.6px;font-size:4.5px;line-height:5.4px;color:#3a3a3a;letter-spacing:0.49px;">Lisans/devir bedelinin</span>
<span style="left:206.0px;top:800.6px;font-size:4.5px;line-height:5.4px;color:#2c4fa8;font-weight:bold;letter-spacing:0.63px;">%75'ine</span>
<span style="left:150.2px;top:807.3px;font-size:4.5px;line-height:5.4px;color:#3a3a3a;letter-spacing:0.48px;">kadar destek</span>
<span style="left:232.0px;top:801.1px;font-size:3.6px;line-height:4.3px;color:#444;">•</span>
<span style="left:239.3px;top:800.6px;font-size:4.5px;line-height:5.4px;color:#3a3a3a;letter-spacing:0.44px;">Vergi teşvikleri</span>
<span style="left:232.0px;top:807.8px;font-size:3.6px;line-height:4.3px;color:#444;">•</span>
<span style="left:239.3px;top:807.3px;font-size:4.5px;line-height:5.4px;color:#3a3a3a;letter-spacing:0.61px;">KOSGEB Teknoyatırım</span>
<span style="left:232.0px;top:815.0px;font-size:3.6px;line-height:4.3px;color:#444;">•</span>
<span style="left:239.3px;top:814.5px;font-size:4.5px;line-height:5.4px;color:#3a3a3a;letter-spacing:0.44px;">Yatırım fonları</span>
<div style="left:51.400px;top:735.2px;width:267px;height:0;border-top:0.700px dashed #777"></div>
<div style="left:51.400px;top:766.6px;width:267px;height:0;border-top:0.700px dashed #777"></div>
<div style="left:51.400px;top:797.3px;width:267px;height:0;border-top:0.700px dashed #777"></div>
<!-- slide -->
<div style="left:401.0px;top:131.5px;width:1177.0px;height:11.8px;background:#fff;"></div>
<svg style="left:401px;top:131.500px" width="1177" height="12" viewBox="401 131.500 1177 12"><path d="M414.8 135.200v4 M449.6 135.200v4 M484.5 135.200v4 M519.3 135.200v4 M554.1 135.200v4 M588.9 135.200v4 M623.7 135.200v4 M658.6 135.200v4 M693.4 135.200v4 M728.2 135.200v4 M763.0 135.200v4 M797.8 135.200v4 M832.7 135.200v4 M867.5 135.200v4 M902.3 135.200v4 M937.1 135.200v4 M971.9 135.200v4 M1006.8 135.200v4 M1041.6 135.200v4 M1076.4 135.200v4 M1111.2 135.200v4 M1146.0 135.200v4 M1180.9 135.200v4 M1215.7 135.200v4 M1250.5 135.200v4 M1285.3 135.200v4 M1320.1 135.200v4 M1355.0 135.200v4 M1389.8 135.200v4 M1424.6 135.200v4 M1459.4 135.200v4 M1494.2 135.200v4 M1529.1 135.200v4 M1563.9 135.200v4" stroke="#666" stroke-width="0.900"/><path d="M406.1 136.800v1 M423.5 136.800v1 M440.9 136.800v1 M458.3 136.800v1 M475.8 136.800v1 M493.2 136.800v1 M510.6 136.800v1 M528.0 136.800v1 M545.4 136.800v1 M562.8 136.800v1 M580.2 136.800v1 M597.6 136.800v1 M615.0 136.800v1 M632.4 136.800v1 M649.9 136.800v1 M667.3 136.800v1 M684.7 136.800v1 M702.1 136.800v1 M719.5 136.800v1 M736.9 136.800v1 M754.3 136.800v1 M771.7 136.800v1 M789.1 136.800v1 M806.5 136.800v1 M824.0 136.800v1 M841.4 136.800v1 M858.8 136.800v1 M876.2 136.800v1 M893.6 136.800v1 M911.0 136.800v1 M928.4 136.800v1 M945.8 136.800v1 M963.2 136.800v1 M980.6 136.800v1 M998.1 136.800v1 M1015.5 136.800v1 M1032.9 136.800v1 M1050.3 136.800v1 M1067.7 136.800v1 M1085.1 136.800v1 M1102.5 136.800v1 M1119.9 136.800v1 M1137.3 136.800v1 M1154.7 136.800v1 M1172.2 136.800v1 M1189.6 136.800v1 M1207.0 136.800v1 M1224.4 136.800v1 M1241.8 136.800v1 M1259.2 136.800v1 M1276.6 136.800v1 M1294.0 136.800v1 M1311.4 136.800v1 M1328.8 136.800v1 M1346.3 136.800v1 M1363.7 136.800v1 M1381.1 136.800v1 M1398.5 136.800v1 M1415.9 136.800v1 M1433.3 136.800v1 M1450.7 136.800v1 M1468.1 136.800v1 M1485.5 136.800v1 M1502.9 136.800v1 M1520.4 136.800v1 M1537.8 136.800v1 M1555.2 136.800v1 M1572.6 136.800v1" stroke="#9a9a9a" stroke-width="0.900"/></svg>
<span style="left:427.3px;top:132.0px;font-size:9.4px;line-height:11.3px;color:#555;letter-spacing:-0.26px;">16</span>
<span style="left:462.1px;top:132.0px;font-size:9.4px;line-height:11.3px;color:#555;letter-spacing:-0.26px;">15</span>
<span style="left:496.9px;top:132.0px;font-size:9.4px;line-height:11.3px;color:#555;letter-spacing:-0.26px;">14</span>
<span style="left:531.7px;top:132.0px;font-size:9.4px;line-height:11.3px;color:#555;letter-spacing:-0.26px;">13</span>
<span style="left:566.5px;top:132.0px;font-size:9.4px;line-height:11.3px;color:#555;letter-spacing:-0.26px;">12</span>
<span style="left:601.7px;top:132.0px;font-size:9.4px;line-height:11.3px;color:#555;letter-spacing:-0.24px;">11</span>
<span style="left:636.2px;top:132.0px;font-size:9.4px;line-height:11.3px;color:#555;letter-spacing:-0.26px;">10</span>
<span style="left:673.5px;top:132.0px;font-size:9.4px;line-height:11.3px;color:#555;letter-spacing:-0.26px;">9</span>
<span style="left:708.3px;top:132.0px;font-size:9.4px;line-height:11.3px;color:#555;letter-spacing:-0.26px;">8</span>
<span style="left:743.1px;top:132.0px;font-size:9.4px;line-height:11.3px;color:#555;letter-spacing:-0.26px;">7</span>
<span style="left:777.9px;top:132.0px;font-size:9.4px;line-height:11.3px;color:#555;letter-spacing:-0.26px;">6</span>
<span style="left:812.8px;top:132.0px;font-size:9.4px;line-height:11.3px;color:#555;letter-spacing:-0.26px;">5</span>
<span style="left:847.6px;top:132.0px;font-size:9.4px;line-height:11.3px;color:#555;letter-spacing:-0.26px;">4</span>
<span style="left:882.4px;top:132.0px;font-size:9.4px;line-height:11.3px;color:#555;letter-spacing:-0.26px;">3</span>
<span style="left:917.2px;top:132.0px;font-size:9.4px;line-height:11.3px;color:#555;letter-spacing:-0.26px;">2</span>
<span style="left:952.0px;top:132.0px;font-size:9.4px;line-height:11.3px;color:#555;letter-spacing:-0.26px;">1</span>
<span style="left:986.9px;top:132.0px;font-size:9.4px;line-height:11.3px;color:#555;letter-spacing:-0.26px;">0</span>
<span style="left:1021.7px;top:132.0px;font-size:9.4px;line-height:11.3px;color:#555;letter-spacing:-0.26px;">1</span>
<span style="left:1056.5px;top:132.0px;font-size:9.4px;line-height:11.3px;color:#555;letter-spacing:-0.26px;">2</span>
<span style="left:1091.3px;top:132.0px;font-size:9.4px;line-height:11.3px;color:#555;letter-spacing:-0.26px;">3</span>
<span style="left:1126.1px;top:132.0px;font-size:9.4px;line-height:11.3px;color:#555;letter-spacing:-0.26px;">4</span>
<span style="left:1161.0px;top:132.0px;font-size:9.4px;line-height:11.3px;color:#555;letter-spacing:-0.26px;">5</span>
<span style="left:1195.8px;top:132.0px;font-size:9.4px;line-height:11.3px;color:#555;letter-spacing:-0.26px;">6</span>
<span style="left:1230.6px;top:132.0px;font-size:9.4px;line-height:11.3px;color:#555;letter-spacing:-0.26px;">7</span>
<span style="left:1265.4px;top:132.0px;font-size:9.4px;line-height:11.3px;color:#555;letter-spacing:-0.26px;">8</span>
<span style="left:1300.2px;top:132.0px;font-size:9.4px;line-height:11.3px;color:#555;letter-spacing:-0.26px;">9</span>
<span style="left:1332.6px;top:132.0px;font-size:9.4px;line-height:11.3px;color:#555;letter-spacing:-0.26px;">10</span>
<span style="left:1367.7px;top:132.0px;font-size:9.4px;line-height:11.3px;color:#555;letter-spacing:-0.24px;">11</span>
<span style="left:1402.2px;top:132.0px;font-size:9.4px;line-height:11.3px;color:#555;letter-spacing:-0.26px;">12</span>
<span style="left:1437.0px;top:132.0px;font-size:9.4px;line-height:11.3px;color:#555;letter-spacing:-0.26px;">13</span>
<span style="left:1471.9px;top:132.0px;font-size:9.4px;line-height:11.3px;color:#555;letter-spacing:-0.26px;">14</span>
<span style="left:1506.7px;top:132.0px;font-size:9.4px;line-height:11.3px;color:#555;letter-spacing:-0.26px;">15</span>
<span style="left:1541.5px;top:132.0px;font-size:9.4px;line-height:11.3px;color:#555;letter-spacing:-0.26px;">16</span>
<div style="left:368.4px;top:170.2px;width:11.8px;height:661.0px;background:#fff;"></div>
<svg style="left:368.400px;top:170.200px" width="12" height="661" viewBox="368.400 170.200 12 661"><path d="M372.400 205.5h4 M372.400 240.2h4 M372.400 274.9h4 M372.400 309.6h4 M372.400 344.4h4 M372.400 379.1h4 M372.400 413.8h4 M372.400 448.5h4 M372.400 483.2h4 M372.400 518.0h4 M372.400 552.7h4 M372.400 587.4h4 M372.400 622.1h4 M372.400 656.8h4 M372.400 691.6h4 M372.400 726.3h4 M372.400 761.0h4 M372.400 795.7h4" stroke="#666" stroke-width="0.900"/><path d="M373.900 179.4h1 M373.900 196.8h1 M373.900 214.2h1 M373.900 231.5h1 M373.900 248.9h1 M373.900 266.2h1 M373.900 283.6h1 M373.900 301.0h1 M373.900 318.3h1 M373.900 335.7h1 M373.900 353.0h1 M373.900 370.4h1 M373.900 387.8h1 M373.900 405.1h1 M373.900 422.5h1 M373.900 439.8h1 M373.900 457.2h1 M373.900 474.6h1 M373.900 491.9h1 M373.900 509.3h1 M373.900 526.6h1 M373.900 544.0h1 M373.900 561.4h1 M373.900 578.7h1 M373.900 596.1h1 M373.900 613.4h1 M373.900 630.8h1 M373.900 648.2h1 M373.900 665.5h1 M373.900 682.9h1 M373.900 700.2h1 M373.900 717.6h1 M373.900 735.0h1 M373.900 752.3h1 M373.900 769.7h1 M373.900 787.0h1 M373.900 804.4h1 M373.900 821.8h1" stroke="#9a9a9a" stroke-width="0.900"/></svg>
<span style="left:369px;top:182.6px;width:11px;height:11px;line-height:11px;font-size:9.400px;color:#555;text-align:center;transform:rotate(-90deg)">9</span>
<span style="left:369px;top:217.3px;width:11px;height:11px;line-height:11px;font-size:9.400px;color:#555;text-align:center;transform:rotate(-90deg)">8</span>
<span style="left:369px;top:252.1px;width:11px;height:11px;line-height:11px;font-size:9.400px;color:#555;text-align:center;transform:rotate(-90deg)">7</span>
<span style="left:369px;top:286.8px;width:11px;height:11px;line-height:11px;font-size:9.400px;color:#555;text-align:center;transform:rotate(-90deg)">6</span>
<span style="left:369px;top:321.5px;width:11px;height:11px;line-height:11px;font-size:9.400px;color:#555;text-align:center;transform:rotate(-90deg)">5</span>
<span style="left:369px;top:356.2px;width:11px;height:11px;line-height:11px;font-size:9.400px;color:#555;text-align:center;transform:rotate(-90deg)">4</span>
<span style="left:369px;top:390.9px;width:11px;height:11px;line-height:11px;font-size:9.400px;color:#555;text-align:center;transform:rotate(-90deg)">3</span>
<span style="left:369px;top:425.7px;width:11px;height:11px;line-height:11px;font-size:9.400px;color:#555;text-align:center;transform:rotate(-90deg)">2</span>
<span style="left:369px;top:460.4px;width:11px;height:11px;line-height:11px;font-size:9.400px;color:#555;text-align:center;transform:rotate(-90deg)">1</span>
<span style="left:369px;top:495.1px;width:11px;height:11px;line-height:11px;font-size:9.400px;color:#555;text-align:center;transform:rotate(-90deg)">0</span>
<span style="left:369px;top:529.8px;width:11px;height:11px;line-height:11px;font-size:9.400px;color:#555;text-align:center;transform:rotate(-90deg)">1</span>
<span style="left:369px;top:564.5px;width:11px;height:11px;line-height:11px;font-size:9.400px;color:#555;text-align:center;transform:rotate(-90deg)">2</span>
<span style="left:369px;top:599.3px;width:11px;height:11px;line-height:11px;font-size:9.400px;color:#555;text-align:center;transform:rotate(-90deg)">3</span>
<span style="left:369px;top:634.0px;width:11px;height:11px;line-height:11px;font-size:9.400px;color:#555;text-align:center;transform:rotate(-90deg)">4</span>
<span style="left:369px;top:668.7px;width:11px;height:11px;line-height:11px;font-size:9.400px;color:#555;text-align:center;transform:rotate(-90deg)">5</span>
<span style="left:369px;top:703.4px;width:11px;height:11px;line-height:11px;font-size:9.400px;color:#555;text-align:center;transform:rotate(-90deg)">6</span>
<span style="left:369px;top:738.1px;width:11px;height:11px;line-height:11px;font-size:9.400px;color:#555;text-align:center;transform:rotate(-90deg)">7</span>
<span style="left:369px;top:772.9px;width:11px;height:11px;line-height:11px;font-size:9.400px;color:#555;text-align:center;transform:rotate(-90deg)">8</span>
<span style="left:369px;top:807.6px;width:11px;height:11px;line-height:11px;font-size:9.400px;color:#555;text-align:center;transform:rotate(-90deg)">9</span>
<div style="left:1592.0px;top:129.0px;width:8.0px;height:680.0px;background:#d8d8d8;"></div>
<div style="left:1592.0px;top:130.2px;width:8.0px;height:11.5px;background:#fff;"></div>
<div style="left:1595.500px;top:134.200px;width:0;height:0;border-left:3px solid transparent;border-right:3px solid transparent;border-bottom:3.500px solid #666"></div>
<div style="left:1592.0px;top:215.6px;width:8.0px;height:23.0px;background:#fff;"></div>
<div style="left:1592.0px;top:795.7px;width:8.0px;height:12.8px;background:#fff;"></div>
<div style="left:1595.500px;top:800.500px;width:0;height:0;border-left:3px solid transparent;border-right:3px solid transparent;border-top:3.500px solid #666"></div>
<svg style="left:1592px;top:810px" width="8" height="30" viewBox="0 0 8 30" fill="none" stroke="#666" stroke-width="1.300"><path d="M3.500 8l4-3.500 M3.500 11.500l4-3.500 M3.500 19l4 3.500 M3.500 22.500l4 3.500"/></svg>
<div style="left:400.0px;top:170.0px;width:1177.5px;height:661.5px;background:#fff;"></div>
<span style="left:466.0px;top:182.4px;font-size:32.4px;line-height:38.9px;color:#0a48c6;font-weight:bold;letter-spacing:-0.64px;">Küresel İnovasyon Endeksi (GII 2024)</span>
<div style="left:586.0px;top:217.2px;width:156.0px;height:1.0px;background:#e88;"></div>
<svg style="left:1410px;top:184px" width="44" height="42" viewBox="1410 184 44 42"><path d="M1413.600 197.400h35.400l-17.600 25.200z" fill="#0d0d0d"/><circle cx="1431.400" cy="197.800" r="11.300" fill="#fff" stroke="#f2a59c" stroke-width="0.800"/><circle cx="1431.400" cy="197.800" r="9.800" fill="#fff" stroke="#ea5a4c" stroke-width="1"/><circle cx="1431.400" cy="197.800" r="8" fill="#e8281c"/><path d="M1420.500 203c3 6 8 9 11 9s8-3 11-9c-3 4-7 6.500-11 6.500s-8-2.500-11-6.500z" fill="#fff"/></svg>
<span style="left:1461.500px;top:194.600px;font-size:21.600px;line-height:26px;font-weight:bold;color:#0d0d0d;transform:scaleX(0.640);transform-origin:0 0;letter-spacing:0.600px;-webkit-text-stroke:0.700px #0d0d0d">TÜBİTAK</span>
<div style="left:519.3px;top:244.0px;width:1.2px;height:14.0px;background:#222;"></div>
<span style="left:543px;top:249.500px;font-size:8.800px;line-height:11px;font-weight:bold;color:#f0792a;font-family:'DejaVu Sans','Liberation Sans',sans-serif;transform:scaleX(1.135);transform-origin:0 50%;-webkit-text-stroke:0.250px #f0792a">Global Innovation Index 2024 rankings</span>
<div class="st" style="left:544.4px;top:290px;width:221.6px;height:465.3px;overflow:hidden">
<b class="sh" style="left:0.0px;top:9.2px">GII</b>
<b class="sh" style="left:0.0px;top:14.6px">rank</b>
<b class="sh" style="left:22.0px;top:14.6px">Economy</b>
<b class="sh" style="left:139.5px;top:14.6px">Score</b>
<b class="sh" style="left:166.6px;top:3.8px">Income</b>
<b class="sh" style="left:166.6px;top:9.2px">group</b>
<b class="sh" style="left:166.6px;top:14.6px">rank</b>
<b class="sh" style="left:197.1px;top:9.2px">Region</b>
<b class="sh" style="left:197.1px;top:14.6px">rank</b>
<i class="hl" style="top:21.500px"></i>
<p style="top:22.90px"><b style="right:205.4px">1</b><span style="left:22.0px">Switzerland</span><span style="right:63.6px">67.5</span><u class="HI" style="left:166.6px">1</u><u class="EUR" style="left:197.1px">1</u></p>
<p style="top:29.50px"><b style="right:205.4px">2</b><span style="left:22.0px">Sweden</span><span style="right:63.6px">64.5</span><u class="HI" style="left:166.6px">2</u><u class="EUR" style="left:197.1px">2</u></p>
<p style="top:36.10px"><b style="right:205.4px">3</b><span style="left:22.0px">United States of America</span><span style="right:63.6px">62.4</span><u class="HI" style="left:166.6px">3</u><u class="NAC" style="left:197.1px">1</u></p>
<p style="top:42.70px"><b style="right:205.4px">4</b><span style="left:22.0px">Singapore</span><span style="right:63.6px">61.2</span><u class="HI" style="left:166.6px">4</u><u class="SEAO" style="left:197.1px">1</u></p>
<p style="top:49.30px"><b style="right:205.4px">5</b><span style="left:22.0px">United Kingdom</span><span style="right:63.6px">61.0</span><u class="HI" style="left:166.6px">5</u><u class="EUR" style="left:197.1px">3</u></p>
<p style="top:55.90px"><b style="right:205.4px">6</b><span style="left:22.0px">Republic of Korea</span><span style="right:63.6px">60.9</span><u class="HI" style="left:166.6px">6</u><u class="SEAO" style="left:197.1px">2</u></p>
<p style="top:62.50px"><b style="right:205.4px">7</b><span style="left:22.0px">Finland</span><span style="right:63.6px">59.4</span><u class="HI" style="left:166.6px">7</u><u class="EUR" style="left:197.1px">4</u></p>
<p style="top:69.10px"><b style="right:205.4px">8</b><span style="left:22.0px">Netherlands (Kingdom of the)</span><span style="right:63.6px">58.8</span><u class="HI" style="left:166.6px">8</u><u class="EUR" style="left:197.1px">5</u></p>
<p style="top:75.70px"><b style="right:205.4px">9</b><span style="left:22.0px">Germany</span><span style="right:63.6px">58.1</span><u class="HI" style="left:166.6px">9</u><u class="EUR" style="left:197.1px">6</u></p>
<p style="top:82.30px"><b style="right:205.4px">10</b><span style="left:22.0px">Denmark</span><span style="right:63.6px">57.1</span><u class="HI" style="left:166.6px">10</u><u class="EUR" style="left:197.1px">7</u></p>
<p style="top:88.90px"><b style="right:205.4px">11</b><span style="left:22.0px">China</span><span style="right:63.6px">56.3</span><u class="UM" style="left:166.6px">1</u><u class="SEAO" style="left:197.1px">3</u></p>
<p style="top:95.50px"><b style="right:205.4px">12</b><span style="left:22.0px">France</span><span style="right:63.6px">55.4</span><u class="HI" style="left:166.6px">11</u><u class="EUR" style="left:197.1px">8</u></p>
<p style="top:102.10px"><b style="right:205.4px">13</b><span style="left:22.0px">Japan</span><span style="right:63.6px">54.1</span><u class="HI" style="left:166.6px">12</u><u class="SEAO" style="left:197.1px">4</u></p>
<p style="top:108.70px"><b style="right:205.4px">14</b><span style="left:22.0px">Canada</span><span style="right:63.6px">52.9</span><u class="HI" style="left:166.6px">13</u><u class="NAC" style="left:197.1px">2</u></p>
<p style="top:115.30px"><b style="right:205.4px">15</b><span style="left:22.0px">Israel</span><span style="right:63.6px">52.7</span><u class="HI" style="left:166.6px">14</u><u class="NAWA" style="left:197.1px">1</u></p>
<p style="top:121.90px"><b style="right:205.4px">16</b><span style="left:22.0px">Estonia</span><span style="right:63.6px">52.3</span><u class="HI" style="left:166.6px">15</u><u class="EUR" style="left:197.1px">9</u></p>
<p style="top:128.50px"><b style="right:205.4px">17</b><span style="left:22.0px">Austria</span><span style="right:63.6px">50.3</span><u class="HI" style="left:166.6px">16</u><u class="EUR" style="left:197.1px">10</u></p>
<p style="top:135.10px"><b style="right:205.4px">18</b><span style="left:22.0px">Hong Kong, China</span><span style="right:63.6px">50.1</span><u class="HI" style="left:166.6px">17</u><u class="SEAO" style="left:197.1px">5</u></p>
<p style="top:141.70px"><b style="right:205.4px">19</b><span style="left:22.0px">Ireland</span><span style="right:63.6px">50.0</span><u class="HI" style="left:166.6px">18</u><u class="EUR" style="left:197.1px">11</u></p>
<p style="top:148.30px"><b style="right:205.4px">20</b><span style="left:22.0px">Luxembourg</span><span style="right:63.6px">49.1</span><u class="HI" style="left:166.6px">19</u><u class="EUR" style="left:197.1px">12</u></p>
<p style="top:154.90px"><b style="right:205.4px">21</b><span style="left:22.0px">Norway</span><span style="right:63.6px">49.1</span><u class="HI" style="left:166.6px">19</u><u class="EUR" style="left:197.1px">12</u></p>
<p style="top:161.50px"><b style="right:205.4px">22</b><span style="left:22.0px">Iceland</span><span style="right:63.6px">48.5</span><u class="HI" style="left:166.6px">21</u><u class="EUR" style="left:197.1px">14</u></p>
<p style="top:168.10px"><b style="right:205.4px">23</b><span style="left:22.0px">Australia</span><span style="right:63.6px">48.1</span><u class="HI" style="left:166.6px">22</u><u class="SEAO" style="left:197.1px">6</u></p>
<p style="top:174.70px"><b style="right:205.4px">24</b><span style="left:22.0px">Belgium</span><span style="right:63.6px">47.7</span><u class="HI" style="left:166.6px">23</u><u class="EUR" style="left:197.1px">15</u></p>
<p style="top:181.30px"><b style="right:205.4px">25</b><span style="left:22.0px">New Zealand</span><span style="right:63.6px">45.9</span><u class="HI" style="left:166.6px">24</u><u class="SEAO" style="left:197.1px">7</u></p>
<p style="top:187.90px"><b style="right:205.4px">26</b><span style="left:22.0px">Italy</span><span style="right:63.6px">45.3</span><u class="HI" style="left:166.6px">25</u><u class="EUR" style="left:197.1px">16</u></p>
<p style="top:194.50px"><b style="right:205.4px">27</b><span style="left:22.0px">Cyprus</span><span style="right:63.6px">45.1</span><u class="HI" style="left:166.6px">26</u><u class="NAWA" style="left:197.1px">2</u></p>
<p style="top:201.10px"><b style="right:205.4px">28</b><span style="left:22.0px">Spain</span><span style="right:63.6px">44.9</span><u class="HI" style="left:166.6px">27</u><u class="EUR" style="left:197.1px">17</u></p>
<p style="top:207.70px"><b style="right:205.4px">29</b><span style="left:22.0px">Malta</span><span style="right:63.6px">44.8</span><u class="HI" style="left:166.6px">28</u><u class="EUR" style="left:197.1px">18</u></p>
<p style="top:214.30px"><b style="right:205.4px">30</b><span style="left:22.0px">Czech Republic</span><span style="right:63.6px">44.0</span><u class="HI" style="left:166.6px">29</u><u class="EUR" style="left:197.1px">19</u></p>
<p style="top:220.90px"><b style="right:205.4px">31</b><span style="left:22.0px">Portugal</span><span style="right:63.6px">43.7</span><u class="HI" style="left:166.6px">30</u><u class="EUR" style="left:197.1px">20</u></p>
<p style="top:227.50px"><b style="right:205.4px">32</b><span style="left:22.0px">United Arab Emirates</span><span style="right:63.6px">42.8</span><u class="HI" style="left:166.6px">31</u><u class="NAWA" style="left:197.1px">3</u></p>
<p style="top:234.10px"><b style="right:205.4px">33</b><span style="left:22.0px">Malaysia</span><span style="right:63.6px">40.5</span><u class="UM" style="left:166.6px">2</u><u class="SEAO" style="left:197.1px">8</u></p>
<p style="top:240.70px"><b style="right:205.4px">34</b><span style="left:22.0px">Slovenia</span><span style="right:63.6px">40.2</span><u class="HI" style="left:166.6px">32</u><u class="EUR" style="left:197.1px">21</u></p>
<p style="top:247.30px"><b style="right:205.4px">35</b><span style="left:22.0px">Lithuania</span><span style="right:63.6px">40.1</span><u class="HI" style="left:166.6px">33</u><u class="EUR" style="left:197.1px">22</u></p>
<p style="top:253.90px"><b style="right:205.4px">36</b><span style="left:22.0px">Hungary</span><span style="right:63.6px">39.6</span><u class="HI" style="left:166.6px">34</u><u class="EUR" style="left:197.1px">23</u></p>
<p style="top:260.50px"><b style="right:205.4px">37</b><span style="left:22.0px">Türkiye</span><span style="right:63.6px">39.0</span><u class="UM" style="left:166.6px">3</u><u class="NAWA" style="left:197.1px">4</u></p>
<p style="top:267.10px"><b style="right:205.4px">38</b><span style="left:22.0px">Bulgaria</span><span style="right:63.6px">38.5</span><u class="UM" style="left:166.6px">4</u><u class="EUR" style="left:197.1px">24</u></p>
<p style="top:273.70px"><b style="right:205.4px">39</b><span style="left:22.0px">India</span><span style="right:63.6px">38.3</span><u class="LM" style="left:166.6px">1</u><u class="CSA" style="left:197.1px">1</u></p>
<p style="top:280.30px"><b style="right:205.4px">40</b><span style="left:22.0px">Poland</span><span style="right:63.6px">37.0</span><u class="HI" style="left:166.6px">35</u><u class="EUR" style="left:197.1px">25</u></p>
<p style="top:286.90px"><b style="right:205.4px">41</b><span style="left:22.0px">Thailand</span><span style="right:63.6px">36.9</span><u class="UM" style="left:166.6px">5</u><u class="SEAO" style="left:197.1px">9</u></p>
<p style="top:293.50px"><b style="right:205.4px">42</b><span style="left:22.0px">Latvia</span><span style="right:63.6px">36.4</span><u class="HI" style="left:166.6px">36</u><u class="EUR" style="left:197.1px">26</u></p>
<p style="top:300.10px"><b style="right:205.4px">43</b><span style="left:22.0px">Croatia</span><span style="right:63.6px">36.3</span><u class="HI" style="left:166.6px">37</u><u class="EUR" style="left:197.1px">27</u></p>
<p style="top:306.70px"><b style="right:205.4px">44</b><span style="left:22.0px">Viet Nam</span><span style="right:63.6px">36.2</span><u class="LM" style="left:166.6px">2</u><u class="SEAO" style="left:197.1px">10</u></p>
<p style="top:313.30px"><b style="right:205.4px">45</b><span style="left:22.0px">Greece</span><span style="right:63.6px">36.2</span><u class="HI" style="left:166.6px">38</u><u class="EUR" style="left:197.1px">28</u></p>
<p style="top:319.90px"><b style="right:205.4px">46</b><span style="left:22.0px">Slovakia</span><span style="right:63.6px">34.3</span><u class="HI" style="left:166.6px">39</u><u class="EUR" style="left:197.1px">29</u></p>
<p style="top:326.50px"><b style="right:205.4px">47</b><span style="left:22.0px">Saudi Arabia</span><span style="right:63.6px">33.9</span><u class="HI" style="left:166.6px">40</u><u class="NAWA" style="left:197.1px">5</u></p>
<p style="top:333.10px"><b style="right:205.4px">48</b><span style="left:22.0px">Romania</span><span style="right:63.6px">33.4</span><u class="HI" style="left:166.6px">41</u><u class="EUR" style="left:197.1px">30</u></p>
<p style="top:339.70px"><b style="right:205.4px">49</b><span style="left:22.0px">Qatar</span><span style="right:63.6px">32.9</span><u class="HI" style="left:166.6px">42</u><u class="NAWA" style="left:197.1px">6</u></p>
<p style="top:346.30px"><b style="right:205.4px">50</b><span style="left:22.0px">Brazil</span><span style="right:63.6px">32.7</span><u class="UM" style="left:166.6px">6</u><u class="LCN" style="left:197.1px">1</u></p>
<p style="top:352.90px"><b style="right:205.4px">51</b><span style="left:22.0px">Chile</span><span style="right:63.6px">32.6</span><u class="HI" style="left:166.6px">43</u><u class="LCN" style="left:197.1px">2</u></p>
<p style="top:359.50px"><b style="right:205.4px">52</b><span style="left:22.0px">Serbia</span><span style="right:63.6px">32.3</span><u class="UM" style="left:166.6px">7</u><u class="EUR" style="left:197.1px">31</u></p>
<p style="top:366.10px"><b style="right:205.4px">53</b><span style="left:22.0px">Philippines</span><span style="right:63.6px">31.1</span><u class="LM" style="left:166.6px">3</u><u class="SEAO" style="left:197.1px">11</u></p>
<p style="top:372.70px"><b style="right:205.4px">54</b><span style="left:22.0px">Indonesia</span><span style="right:63.6px">30.6</span><u class="UM" style="left:166.6px">8</u><u class="SEAO" style="left:197.1px">12</u></p>
<p style="top:379.30px"><b style="right:205.4px">55</b><span style="left:22.0px">Mauritius</span><span style="right:63.6px">30.6</span><u class="UM" style="left:166.6px">8</u><u class="SSF" style="left:197.1px">1</u></p>
<p style="top:385.90px"><b style="right:205.4px">56</b><span style="left:22.0px">Mexico</span><span style="right:63.6px">30.4</span><u class="UM" style="left:166.6px">10</u><u class="LCN" style="left:197.1px">3</u></p>
<p style="top:392.50px"><b style="right:205.4px">57</b><span style="left:22.0px">Georgia</span><span style="right:63.6px">30.4</span><u class="UM" style="left:166.6px">10</u><u class="NAWA" style="left:197.1px">7</u></p>
<p style="top:399.10px"><b style="right:205.4px">58</b><span style="left:22.0px">North Macedonia</span><span style="right:63.6px">29.9</span><u class="UM" style="left:166.6px">12</u><u class="EUR" style="left:197.1px">32</u></p>
<p style="top:405.70px"><b style="right:205.4px">59</b><span style="left:22.0px">Russian Federation</span><span style="right:63.6px">29.7</span><u class="UM" style="left:166.6px">13</u><u class="EUR" style="left:197.1px">33</u></p>
<p style="top:412.30px"><b style="right:205.4px">60</b><span style="left:22.0px">Ukraine</span><span style="right:63.6px">29.5</span><u class="LM" style="left:166.6px">4</u><u class="EUR" style="left:197.1px">34</u></p>
<p style="top:418.90px"><b style="right:205.4px">61</b><span style="left:22.0px">Colombia</span><span style="right:63.6px">29.2</span><u class="UM" style="left:166.6px">14</u><u class="LCN" style="left:197.1px">4</u></p>
<p style="top:425.50px"><b style="right:205.4px">62</b><span style="left:22.0px">Uruguay</span><span style="right:63.6px">29.1</span><u class="HI" style="left:166.6px">44</u><u class="LCN" style="left:197.1px">5</u></p>
<p style="top:432.10px"><b style="right:205.4px">63</b><span style="left:22.0px">Armenia</span><span style="right:63.6px">29.0</span><u class="UM" style="left:166.6px">15</u><u class="NAWA" style="left:197.1px">8</u></p>
<p style="top:438.70px"><b style="right:205.4px">64</b><span style="left:22.0px">Iran (Islamic Republic of)</span><span style="right:63.6px">28.9</span><u class="LM" style="left:166.6px">5</u><u class="CSA" style="left:197.1px">2</u></p>
<p style="top:445.30px"><b style="right:205.4px">65</b><span style="left:22.0px">Montenegro</span><span style="right:63.6px">28.9</span><u class="UM" style="left:166.6px">16</u><u class="EUR" style="left:197.1px">35</u></p>
<p style="top:451.90px"><b style="right:205.4px">66</b><span style="left:22.0px">Morocco</span><span style="right:63.6px">28.8</span><u class="LM" style="left:166.6px">6</u><u class="NAWA" style="left:197.1px">9</u></p>
<p style="top:458.50px"><b style="right:205.4px">67</b><span style="left:22.0px">Mongolia</span><span style="right:63.6px">28.7</span><u class="LM" style="left:166.6px">7</u><u class="SEAO" style="left:197.1px">13</u></p>
</div>
<div class="st" style="left:778.2px;top:290px;width:221.6px;height:458.7px;overflow:hidden">
<b class="sh" style="left:0.0px;top:9.2px">GII</b>
<b class="sh" style="left:0.0px;top:14.6px">rank</b>
<b class="sh" style="left:21.8px;top:14.6px">Economy</b>
<b class="sh" style="left:138.3px;top:14.6px">Score</b>
<b class="sh" style="left:166.6px;top:3.8px">Income</b>
<b class="sh" style="left:166.6px;top:9.2px">group</b>
<b class="sh" style="left:166.6px;top:14.6px">rank</b>
<b class="sh" style="left:197.1px;top:9.2px">Region</b>
<b class="sh" style="left:197.1px;top:14.6px">rank</b>
<i class="hl" style="top:21.500px"></i>
<p style="top:22.90px"><b style="right:204.4px">68</b><span style="left:21.8px">Republic of Moldova</span><span style="right:64.8px">28.7</span><u class="UM" style="left:166.6px">17</u><u class="EUR" style="left:197.1px">36</u></p>
<p style="top:29.50px"><b style="right:204.4px">69</b><span style="left:21.8px">South Africa</span><span style="right:64.8px">28.3</span><u class="UM" style="left:166.6px">18</u><u class="SSF" style="left:197.1px">2</u></p>
<p style="top:36.10px"><b style="right:204.4px">70</b><span style="left:21.8px">Costa Rica</span><span style="right:64.8px">28.3</span><u class="UM" style="left:166.6px">18</u><u class="LCN" style="left:197.1px">6</u></p>
<p style="top:42.70px"><b style="right:204.4px">71</b><span style="left:21.8px">Kuwait</span><span style="right:64.8px">28.1</span><u class="HI" style="left:166.6px">45</u><u class="NAWA" style="left:197.1px">10</u></p>
<p style="top:49.30px"><b style="right:204.4px">72</b><span style="left:21.8px">Bahrain</span><span style="right:64.8px">27.6</span><u class="HI" style="left:166.6px">46</u><u class="NAWA" style="left:197.1px">11</u></p>
<p style="top:55.90px"><b style="right:204.4px">73</b><span style="left:21.8px">Jordan</span><span style="right:64.8px">27.5</span><u class="LM" style="left:166.6px">8</u><u class="NAWA" style="left:197.1px">12</u></p>
<p style="top:62.50px"><b style="right:204.4px">74</b><span style="left:21.8px">Oman</span><span style="right:64.8px">27.1</span><u class="HI" style="left:166.6px">47</u><u class="NAWA" style="left:197.1px">13</u></p>
<p style="top:69.10px"><b style="right:204.4px">75</b><span style="left:21.8px">Peru</span><span style="right:64.8px">26.7</span><u class="UM" style="left:166.6px">20</u><u class="LCN" style="left:197.1px">7</u></p>
<p style="top:75.70px"><b style="right:204.4px">76</b><span style="left:21.8px">Argentina</span><span style="right:64.8px">26.4</span><u class="UM" style="left:166.6px">21</u><u class="LCN" style="left:197.1px">8</u></p>
<p style="top:82.30px"><b style="right:204.4px">77</b><span style="left:21.8px">Barbados</span><span style="right:64.8px">26.1</span><u class="HI" style="left:166.6px">48</u><u class="LCN" style="left:197.1px">9</u></p>
<p style="top:88.90px"><b style="right:204.4px">78</b><span style="left:21.8px">Kazakhstan</span><span style="right:64.8px">25.7</span><u class="UM" style="left:166.6px">22</u><u class="CSA" style="left:197.1px">3</u></p>
<p style="top:95.50px"><b style="right:204.4px">79</b><span style="left:21.8px">Jamaica</span><span style="right:64.8px">25.7</span><u class="UM" style="left:166.6px">22</u><u class="LCN" style="left:197.1px">10</u></p>
<p style="top:102.10px"><b style="right:204.4px">80</b><span style="left:21.8px">Bosnia and Herzegovina</span><span style="right:64.8px">25.5</span><u class="UM" style="left:166.6px">24</u><u class="EUR" style="left:197.1px">37</u></p>
<p style="top:108.70px"><b style="right:204.4px">81</b><span style="left:21.8px">Tunisia</span><span style="right:64.8px">25.4</span><u class="LM" style="left:166.6px">9</u><u class="NAWA" style="left:197.1px">14</u></p>
<p style="top:115.30px"><b style="right:204.4px">82</b><span style="left:21.8px">Panama</span><span style="right:64.8px">24.7</span><u class="HI" style="left:166.6px">49</u><u class="LCN" style="left:197.1px">11</u></p>
<p style="top:121.90px"><b style="right:204.4px">83</b><span style="left:21.8px">Uzbekistan</span><span style="right:64.8px">24.7</span><u class="LM" style="left:166.6px">10</u><u class="CSA" style="left:197.1px">4</u></p>
<p style="top:128.50px"><b style="right:204.4px">84</b><span style="left:21.8px">Albania</span><span style="right:64.8px">24.5</span><u class="UM" style="left:166.6px">25</u><u class="EUR" style="left:197.1px">38</u></p>
<p style="top:135.10px"><b style="right:204.4px">85</b><span style="left:21.8px">Belarus</span><span style="right:64.8px">24.2</span><u class="UM" style="left:166.6px">26</u><u class="EUR" style="left:197.1px">39</u></p>
<p style="top:141.70px"><b style="right:204.4px">86</b><span style="left:21.8px">Egypt</span><span style="right:64.8px">23.7</span><u class="LM" style="left:166.6px">11</u><u class="NAWA" style="left:197.1px">15</u></p>
<p style="top:148.30px"><b style="right:204.4px">87</b><span style="left:21.8px">Botswana</span><span style="right:64.8px">23.1</span><u class="UM" style="left:166.6px">27</u><u class="SSF" style="left:197.1px">3</u></p>
<p style="top:154.90px"><b style="right:204.4px">88</b><span style="left:21.8px">Brunei Darussalam</span><span style="right:64.8px">22.8</span><u class="HI" style="left:166.6px">50</u><u class="SEAO" style="left:197.1px">14</u></p>
<p style="top:161.50px"><b style="right:204.4px">89</b><span style="left:21.8px">Sri Lanka</span><span style="right:64.8px">22.6</span><u class="LM" style="left:166.6px">12</u><u class="CSA" style="left:197.1px">5</u></p>
<p style="top:168.10px"><b style="right:204.4px">90</b><span style="left:21.8px">Cabo Verde</span><span style="right:64.8px">22.3</span><u class="LM" style="left:166.6px">13</u><u class="SSF" style="left:197.1px">4</u></p>
<p style="top:174.70px"><b style="right:204.4px">91</b><span style="left:21.8px">Pakistan</span><span style="right:64.8px">22.0</span><u class="LM" style="left:166.6px">14</u><u class="CSA" style="left:197.1px">6</u></p>
<p style="top:181.30px"><b style="right:204.4px">92</b><span style="left:21.8px">Senegal</span><span style="right:64.8px">22.0</span><u class="LM" style="left:166.6px">14</u><u class="SSF" style="left:197.1px">5</u></p>
<p style="top:187.90px"><b style="right:204.4px">93</b><span style="left:21.8px">Paraguay</span><span style="right:64.8px">21.9</span><u class="UM" style="left:166.6px">28</u><u class="LCN" style="left:197.1px">12</u></p>
<p style="top:194.50px"><b style="right:204.4px">94</b><span style="left:21.8px">Lebanon</span><span style="right:64.8px">21.5</span><u class="LM" style="left:166.6px">16</u><u class="NAWA" style="left:197.1px">16</u></p>
<p style="top:201.10px"><b style="right:204.4px">95</b><span style="left:21.8px">Azerbaijan</span><span style="right:64.8px">21.3</span><u class="UM" style="left:166.6px">29</u><u class="NAWA" style="left:197.1px">17</u></p>
<p style="top:207.70px"><b style="right:204.4px">96</b><span style="left:21.8px">Kenya</span><span style="right:64.8px">21.0</span><u class="LM" style="left:166.6px">17</u><u class="SSF" style="left:197.1px">6</u></p>
<p style="top:214.30px"><b style="right:204.4px">97</b><span style="left:21.8px">Dominican Republic</span><span style="right:64.8px">20.8</span><u class="UM" style="left:166.6px">30</u><u class="LCN" style="left:197.1px">13</u></p>
<p style="top:220.90px"><b style="right:204.4px">98</b><span style="left:21.8px">El Salvador</span><span style="right:64.8px">20.6</span><u class="UM" style="left:166.6px">31</u><u class="LCN" style="left:197.1px">14</u></p>
<p style="top:227.50px"><b style="right:204.4px">99</b><span style="left:21.8px">Kyrgyzstan</span><span style="right:64.8px">20.4</span><u class="LM" style="left:166.6px">18</u><u class="CSA" style="left:197.1px">7</u></p>
<p style="top:234.10px"><b style="right:204.4px">100</b><span style="left:21.8px">Bolivia (Plurinational State of)</span><span style="right:64.8px">20.2</span><u class="LM" style="left:166.6px">19</u><u class="LCN" style="left:197.1px">15</u></p>
<p style="top:240.70px"><b style="right:204.4px">101</b><span style="left:21.8px">Ghana</span><span style="right:64.8px">20.0</span><u class="LM" style="left:166.6px">20</u><u class="SSF" style="left:197.1px">7</u></p>
<p style="top:247.30px"><b style="right:204.4px">102</b><span style="left:21.8px">Namibia</span><span style="right:64.8px">20.0</span><u class="UM" style="left:166.6px">32</u><u class="SSF" style="left:197.1px">7</u></p>
<p style="top:253.90px"><b style="right:204.4px">103</b><span style="left:21.8px">Cambodia</span><span style="right:64.8px">19.9</span><u class="LM" style="left:166.6px">21</u><u class="SEAO" style="left:197.1px">15</u></p>
<p style="top:260.50px"><b style="right:204.4px">104</b><span style="left:21.8px">Rwanda</span><span style="right:64.8px">19.7</span><u class="LI" style="left:166.6px">1</u><u class="SSF" style="left:197.1px">9</u></p>
<p style="top:267.10px"><b style="right:204.4px">105</b><span style="left:21.8px">Ecuador</span><span style="right:64.8px">19.3</span><u class="UM" style="left:166.6px">33</u><u class="LCN" style="left:197.1px">16</u></p>
<p style="top:273.70px"><b style="right:204.4px">106</b><span style="left:21.8px">Bangladesh</span><span style="right:64.8px">19.1</span><u class="LM" style="left:166.6px">22</u><u class="CSA" style="left:197.1px">8</u></p>
<p style="top:280.30px"><b style="right:204.4px">107</b><span style="left:21.8px">Tajikistan</span><span style="right:64.8px">18.6</span><u class="LM" style="left:166.6px">23</u><u class="CSA" style="left:197.1px">9</u></p>
<p style="top:286.90px"><b style="right:204.4px">108</b><span style="left:21.8px">Trinidad and Tobago</span><span style="right:64.8px">18.4</span><u class="HI" style="left:166.6px">51</u><u class="LCN" style="left:197.1px">17</u></p>
<p style="top:293.50px"><b style="right:204.4px">109</b><span style="left:21.8px">Nepal</span><span style="right:64.8px">18.1</span><u class="LM" style="left:166.6px">24</u><u class="CSA" style="left:197.1px">10</u></p>
<p style="top:300.10px"><b style="right:204.4px">110</b><span style="left:21.8px">Madagascar</span><span style="right:64.8px">17.9</span><u class="LI" style="left:166.6px">2</u><u class="SSF" style="left:197.1px">10</u></p>
<p style="top:306.70px"><b style="right:204.4px">111</b><span style="left:21.8px">Lao People's Democratic Republic</span><span style="right:64.8px">17.8</span><u class="LM" style="left:166.6px">25</u><u class="SEAO" style="left:197.1px">16</u></p>
<p style="top:313.30px"><b style="right:204.4px">112</b><span style="left:21.8px">Côte d'Ivoire</span><span style="right:64.8px">17.5</span><u class="LM" style="left:166.6px">26</u><u class="SSF" style="left:197.1px">11</u></p>
<p style="top:319.90px"><b style="right:204.4px">113</b><span style="left:21.8px">Nigeria</span><span style="right:64.8px">17.1</span><u class="LM" style="left:166.6px">27</u><u class="SSF" style="left:197.1px">12</u></p>
<p style="top:326.50px"><b style="right:204.4px">114</b><span style="left:21.8px">Honduras</span><span style="right:64.8px">16.7</span><u class="LM" style="left:166.6px">28</u><u class="LCN" style="left:197.1px">18</u></p>
<p style="top:333.10px"><b style="right:204.4px">115</b><span style="left:21.8px">Algeria</span><span style="right:64.8px">16.2</span><u class="LM" style="left:166.6px">29</u><u class="NAWA" style="left:197.1px">18</u></p>
<p style="top:339.70px"><b style="right:204.4px">116</b><span style="left:21.8px">Zambia</span><span style="right:64.8px">15.7</span><u class="LM" style="left:166.6px">30</u><u class="SSF" style="left:197.1px">13</u></p>
<p style="top:346.30px"><b style="right:204.4px">117</b><span style="left:21.8px">Togo</span><span style="right:64.8px">15.6</span><u class="LI" style="left:166.6px">3</u><u class="SSF" style="left:197.1px">14</u></p>
<p style="top:352.90px"><b style="right:204.4px">118</b><span style="left:21.8px">Zimbabwe</span><span style="right:64.8px">15.6</span><u class="LM" style="left:166.6px">31</u><u class="SSF" style="left:197.1px">14</u></p>
<p style="top:359.50px"><b style="right:204.4px">119</b><span style="left:21.8px">Benin</span><span style="right:64.8px">15.4</span><u class="LM" style="left:166.6px">32</u><u class="SSF" style="left:197.1px">16</u></p>
<p style="top:366.10px"><b style="right:204.4px">120</b><span style="left:21.8px">United Republic of Tanzania</span><span style="right:64.8px">15.3</span><u class="LM" style="left:166.6px">33</u><u class="SSF" style="left:197.1px">17</u></p>
<p style="top:372.70px"><b style="right:204.4px">121</b><span style="left:21.8px">Uganda</span><span style="right:64.8px">14.9</span><u class="LI" style="left:166.6px">4</u><u class="SSF" style="left:197.1px">18</u></p>
<p style="top:379.30px"><b style="right:204.4px">122</b><span style="left:21.8px">Guatemala</span><span style="right:64.8px">14.6</span><u class="UM" style="left:166.6px">34</u><u class="LCN" style="left:197.1px">19</u></p>
<p style="top:385.90px"><b style="right:204.4px">123</b><span style="left:21.8px">Cameroon</span><span style="right:64.8px">14.4</span><u class="LM" style="left:166.6px">34</u><u class="SSF" style="left:197.1px">19</u></p>
<p style="top:392.50px"><b style="right:204.4px">124</b><span style="left:21.8px">Nicaragua</span><span style="right:64.8px">14.0</span><u class="LM" style="left:166.6px">35</u><u class="LCN" style="left:197.1px">20</u></p>
<p style="top:399.10px"><b style="right:204.4px">125</b><span style="left:21.8px">Myanmar</span><span style="right:64.8px">13.8</span><u class="LM" style="left:166.6px">36</u><u class="SEAO" style="left:197.1px">17</u></p>
<p style="top:405.70px"><b style="right:204.4px">126</b><span style="left:21.8px">Mauritania</span><span style="right:64.8px">13.2</span><u class="LM" style="left:166.6px">37</u><u class="SSF" style="left:197.1px">20</u></p>
<p style="top:412.30px"><b style="right:204.4px">127</b><span style="left:21.8px">Burundi</span><span style="right:64.8px">13.2</span><u class="LI" style="left:166.6px">5</u><u class="SSF" style="left:197.1px">20</u></p>
<p style="top:418.90px"><b style="right:204.4px">128</b><span style="left:21.8px">Mozambique</span><span style="right:64.8px">13.1</span><u class="LI" style="left:166.6px">6</u><u class="SSF" style="left:197.1px">22</u></p>
<p style="top:425.50px"><b style="right:204.4px">129</b><span style="left:21.8px">Burkina Faso</span><span style="right:64.8px">12.8</span><u class="LI" style="left:166.6px">7</u><u class="SSF" style="left:197.1px">23</u></p>
<p style="top:432.10px"><b style="right:204.4px">130</b><span style="left:21.8px">Ethiopia</span><span style="right:64.8px">12.3</span><u class="LI" style="left:166.6px">8</u><u class="SSF" style="left:197.1px">24</u></p>
<p style="top:438.70px"><b style="right:204.4px">131</b><span style="left:21.8px">Mali</span><span style="right:64.8px">11.8</span><u class="LI" style="left:166.6px">9</u><u class="SSF" style="left:197.1px">25</u></p>
<p style="top:445.30px"><b style="right:204.4px">132</b><span style="left:21.8px">Niger</span><span style="right:64.8px">11.2</span><u class="LI" style="left:166.6px">10</u><u class="SSF" style="left:197.1px">26</u></p>
<p style="top:451.90px"><b style="right:204.4px">133</b><span style="left:21.8px">Angola</span><span style="right:64.8px">10.2</span><u class="LM" style="left:166.6px">38</u><u class="SSF" style="left:197.1px">27</u></p>
</div>
<div style="left:544.4px;top:762.4px;width:7.6px;height:2.2px;background:#f47a20;"></div>
<span style="left:555.7px;top:759.7px;font-size:6.1px;line-height:7.3px;color:#2e2e2e;letter-spacing:-0.03px;">High-income</span>
<div style="left:544.4px;top:768.5px;width:7.6px;height:2.2px;background:#e99a68;"></div>
<span style="left:555.7px;top:765.8px;font-size:6.1px;line-height:7.3px;color:#2e2e2e;letter-spacing:-0.03px;">Upper middle-income</span>
<div style="left:622.4px;top:762.4px;width:7.6px;height:2.2px;background:#f3bf9c;"></div>
<span style="left:633.0px;top:759.7px;font-size:6.1px;line-height:7.3px;color:#2e2e2e;letter-spacing:-0.03px;">Lower middle-income</span>
<div style="left:622.4px;top:768.5px;width:7.6px;height:2.2px;background:#f9e1d1;"></div>
<span style="left:633.0px;top:765.8px;font-size:6.1px;line-height:7.3px;color:#2e2e2e;letter-spacing:-0.03px;">Low-income</span>
<div style="left:700.3px;top:762.4px;width:7.6px;height:2.2px;background:#6aa63c;"></div>
<span style="left:711.0px;top:759.7px;font-size:6.1px;line-height:7.3px;color:#2e2e2e;letter-spacing:-0.03px;">Europe</span>
<div style="left:700.3px;top:768.5px;width:7.6px;height:2.2px;background:#a0c465;"></div>
<span style="left:711.0px;top:765.8px;font-size:6.1px;line-height:7.3px;color:#2e2e2e;letter-spacing:-0.03px;">Northern America</span>
<div style="left:700.3px;top:774.6px;width:7.6px;height:2.2px;background:#c6dba0;"></div>
<span style="left:711.0px;top:771.9px;font-size:6.1px;line-height:7.3px;color:#2e2e2e;letter-spacing:-0.03px;">Latin America and the Caribbean</span>
<div style="left:806.7px;top:762.4px;width:7.6px;height:2.2px;background:#1fa3dc;"></div>
<span style="left:817.4px;top:759.7px;font-size:6.1px;line-height:7.3px;color:#2e2e2e;letter-spacing:-0.03px;">South East Asia, East Asia, and Oceania</span>
<div style="left:806.7px;top:768.5px;width:7.6px;height:2.2px;background:#7bc2e8;"></div>
<span style="left:817.4px;top:765.8px;font-size:6.1px;line-height:7.3px;color:#2e2e2e;letter-spacing:-0.03px;">Northern Africa and Western Asia</span>
<div style="left:928.9px;top:762.9px;width:7.6px;height:2.2px;background:#a9d4ee;"></div>
<span style="left:939.6px;top:760.2px;font-size:6.1px;line-height:7.3px;color:#2e2e2e;letter-spacing:-0.03px;">Sub-Saharan Africa</span>
<div style="left:928.9px;top:769.1px;width:7.6px;height:2.2px;background:#d6e9f7;"></div>
<span style="left:939.6px;top:766.4px;font-size:6.1px;line-height:7.3px;color:#2e2e2e;letter-spacing:-0.03px;">Central and Southern Asia</span>
<div class="bt" style="left:1136.9px;top:245px;width:330.6px;height:554.900px;overflow:hidden">
<b class="bh" style="left:0.0px;top:13.6px">GII</b>
<b class="bh" style="left:0.0px;top:24.0px">rank</b>
<b class="bh" style="left:32.9px;top:24.0px">Economy</b>
<b class="bh" style="left:206.6px;top:24.0px">Score</b>
<b class="bh" style="left:247.7px;top:3.2px">Income</b>
<b class="bh" style="left:247.7px;top:13.6px">group</b>
<b class="bh" style="left:247.7px;top:24.0px">rank</b>
<b class="bh" style="left:294.0px;top:13.6px">Region</b>
<b class="bh" style="left:294.0px;top:24.0px">rank</b>
<i class="hl" style="top:38.300px;height:1.500px"></i>
<p style="top:39.10px"><b style="right:306.9px">1</b><span style="left:32.9px">Switzerland</span><span style="right:97.2px">67.5</span><u class="HI" style="left:247.7px">1</u><u class="EUR" style="left:293.5px">1</u></p>
<p style="top:51.41px"><b style="right:306.9px">2</b><span style="left:32.9px">Sweden</span><span style="right:97.2px">64.5</span><u class="HI" style="left:247.7px">2</u><u class="EUR" style="left:293.5px">2</u></p>
<p style="top:63.72px"><b style="right:306.9px">3</b><span style="left:32.9px">United States of America</span><span style="right:97.2px">62.4</span><u class="HI" style="left:247.7px">3</u><u class="NAC" style="left:293.5px">1</u></p>
<p style="top:76.03px"><b style="right:306.9px">4</b><span style="left:32.9px">Singapore</span><span style="right:97.2px">61.2</span><u class="HI" style="left:247.7px">4</u><u class="SEAO" style="left:293.5px">1</u></p>
<p style="top:88.34px"><b style="right:306.9px">5</b><span style="left:32.9px">United Kingdom</span><span style="right:97.2px">61.0</span><u class="HI" style="left:247.7px">5</u><u class="EUR" style="left:293.5px">3</u></p>
<p style="top:100.65px"><b style="right:306.9px">6</b><span style="left:32.9px">Republic of Korea</span><span style="right:97.2px">60.9</span><u class="HI" style="left:247.7px">6</u><u class="SEAO" style="left:293.5px">2</u></p>
<p style="top:112.96px"><b style="right:306.9px">7</b><span style="left:32.9px">Finland</span><span style="right:97.2px">59.4</span><u class="HI" style="left:247.7px">7</u><u class="EUR" style="left:293.5px">4</u></p>
<p style="top:125.27px"><b style="right:306.9px">8</b><span style="left:32.9px">Netherlands (Kingdom of the)</span><span style="right:97.2px">58.8</span><u class="HI" style="left:247.7px">8</u><u class="EUR" style="left:293.5px">5</u></p>
<p style="top:137.58px"><b style="right:306.9px">9</b><span style="left:32.9px">Germany</span><span style="right:97.2px">58.1</span><u class="HI" style="left:247.7px">9</u><u class="EUR" style="left:293.5px">6</u></p>
<p style="top:149.89px"><b style="right:306.9px">10</b><span style="left:32.9px">Denmark</span><span style="right:97.2px">57.1</span><u class="HI" style="left:247.7px">10</u><u class="EUR" style="left:293.5px">7</u></p>
<p style="top:162.20px"><b style="right:306.9px">11</b><span style="left:32.9px">China</span><span style="right:97.2px">56.3</span><u class="UM" style="left:247.7px">1</u><u class="SEAO" style="left:293.5px">3</u></p>
<p style="top:174.51px"><b style="right:306.9px">12</b><span style="left:32.9px">France</span><span style="right:97.2px">55.4</span><u class="HI" style="left:247.7px">11</u><u class="EUR" style="left:293.5px">8</u></p>
<p style="top:186.82px"><b style="right:306.9px">13</b><span style="left:32.9px">Japan</span><span style="right:97.2px">54.1</span><u class="HI" style="left:247.7px">12</u><u class="SEAO" style="left:293.5px">4</u></p>
<p style="top:199.13px"><b style="right:306.9px">14</b><span style="left:32.9px">Canada</span><span style="right:97.2px">52.9</span><u class="HI" style="left:247.7px">13</u><u class="NAC" style="left:293.5px">2</u></p>
<p style="top:211.44px"><b style="right:306.9px">15</b><span style="left:32.9px">Israel</span><span style="right:97.2px">52.7</span><u class="HI" style="left:247.7px">14</u><u class="NAWA" style="left:293.5px">1</u></p>
<p style="top:223.75px"><b style="right:306.9px">16</b><span style="left:32.9px">Estonia</span><span style="right:97.2px">52.3</span><u class="HI" style="left:247.7px">15</u><u class="EUR" style="left:293.5px">9</u></p>
<p style="top:236.06px"><b style="right:306.9px">17</b><span style="left:32.9px">Austria</span><span style="right:97.2px">50.3</span><u class="HI" style="left:247.7px">16</u><u class="EUR" style="left:293.5px">10</u></p>
<p style="top:248.37px"><b style="right:306.9px">18</b><span style="left:32.9px">Hong Kong, China</span><span style="right:97.2px">50.1</span><u class="HI" style="left:247.7px">17</u><u class="SEAO" style="left:293.5px">5</u></p>
<p style="top:260.68px"><b style="right:306.9px">19</b><span style="left:32.9px">Ireland</span><span style="right:97.2px">50.0</span><u class="HI" style="left:247.7px">18</u><u class="EUR" style="left:293.5px">11</u></p>
<p style="top:272.99px"><b style="right:306.9px">20</b><span style="left:32.9px">Luxembourg</span><span style="right:97.2px">49.1</span><u class="HI" style="left:247.7px">19</u><u class="EUR" style="left:293.5px">12</u></p>
<p style="top:285.30px"><b style="right:306.9px">21</b><span style="left:32.9px">Norway</span><span style="right:97.2px">49.1</span><u class="HI" style="left:247.7px">19</u><u class="EUR" style="left:293.5px">12</u></p>
<p style="top:297.61px"><b style="right:306.9px">22</b><span style="left:32.9px">Iceland</span><span style="right:97.2px">48.5</span><u class="HI" style="left:247.7px">21</u><u class="EUR" style="left:293.5px">14</u></p>
<p style="top:309.92px"><b style="right:306.9px">23</b><span style="left:32.9px">Australia</span><span style="right:97.2px">48.1</span><u class="HI" style="left:247.7px">22</u><u class="SEAO" style="left:293.5px">6</u></p>
<p style="top:322.23px"><b style="right:306.9px">24</b><span style="left:32.9px">Belgium</span><span style="right:97.2px">47.7</span><u class="HI" style="left:247.7px">23</u><u class="EUR" style="left:293.5px">15</u></p>
<p style="top:334.54px"><b style="right:306.9px">25</b><span style="left:32.9px">New Zealand</span><span style="right:97.2px">45.9</span><u class="HI" style="left:247.7px">24</u><u class="SEAO" style="left:293.5px">7</u></p>
<p style="top:346.85px"><b style="right:306.9px">26</b><span style="left:32.9px">Italy</span><span style="right:97.2px">45.3</span><u class="HI" style="left:247.7px">25</u><u class="EUR" style="left:293.5px">16</u></p>
<p style="top:359.16px"><b style="right:306.9px">27</b><span style="left:32.9px">Cyprus</span><span style="right:97.2px">45.1</span><u class="HI" style="left:247.7px">26</u><u class="NAWA" style="left:293.5px">2</u></p>
<p style="top:371.47px"><b style="right:306.9px">28</b><span style="left:32.9px">Spain</span><span style="right:97.2px">44.9</span><u class="HI" style="left:247.7px">27</u><u class="EUR" style="left:293.5px">17</u></p>
<p style="top:383.78px"><b style="right:306.9px">29</b><span style="left:32.9px">Malta</span><span style="right:97.2px">44.8</span><u class="HI" style="left:247.7px">28</u><u class="EUR" style="left:293.5px">18</u></p>
<p style="top:396.09px"><b style="right:306.9px">30</b><span style="left:32.9px">Czech Republic</span><span style="right:97.2px">44.0</span><u class="HI" style="left:247.7px">29</u><u class="EUR" style="left:293.5px">19</u></p>
<p style="top:408.40px"><b style="right:306.9px">31</b><span style="left:32.9px">Portugal</span><span style="right:97.2px">43.7</span><u class="HI" style="left:247.7px">30</u><u class="EUR" style="left:293.5px">20</u></p>
<p style="top:420.71px"><b style="right:306.9px">32</b><span style="left:32.9px">United Arab Emirates</span><span style="right:97.2px">42.8</span><u class="HI" style="left:247.7px">31</u><u class="NAWA" style="left:293.5px">3</u></p>
<p style="top:433.02px"><b style="right:306.9px">33</b><span style="left:32.9px">Malaysia</span><span style="right:97.2px">40.5</span><u class="UM" style="left:247.7px">2</u><u class="SEAO" style="left:293.5px">8</u></p>
<p style="top:445.33px"><b style="right:306.9px">34</b><span style="left:32.9px">Slovenia</span><span style="right:97.2px">40.2</span><u class="HI" style="left:247.7px">32</u><u class="EUR" style="left:293.5px">21</u></p>
<p style="top:457.64px"><b style="right:306.9px">35</b><span style="left:32.9px">Lithuania</span><span style="right:97.2px">40.1</span><u class="HI" style="left:247.7px">33</u><u class="EUR" style="left:293.5px">22</u></p>
<p style="top:469.95px"><b style="right:306.9px">36</b><span style="left:32.9px">Hungary</span><span style="right:97.2px">39.6</span><u class="HI" style="left:247.7px">34</u><u class="EUR" style="left:293.5px">23</u></p>
<p style="top:482.26px"><b style="right:306.9px">37</b><span style="left:32.9px"><mark>Türkiye</mark></span><span style="right:97.2px">39.0</span><u class="UM" style="left:247.7px">3</u><u class="NAWA" style="left:293.5px">4</u></p>
<p style="top:494.57px"><b style="right:306.9px">38</b><span style="left:32.9px">Bulgaria</span><span style="right:97.2px">38.5</span><u class="UM" style="left:247.7px">4</u><u class="EUR" style="left:293.5px">24</u></p>
<p style="top:506.88px"><b style="right:306.9px">39</b><span style="left:32.9px">India</span><span style="right:97.2px">38.3</span><u class="LM" style="left:247.7px">1</u><u class="CSA" style="left:293.5px">1</u></p>
<p style="top:519.19px"><b style="right:306.9px">40</b><span style="left:32.9px">Poland</span><span style="right:97.2px">37.0</span><u class="HI" style="left:247.7px">35</u><u class="EUR" style="left:293.5px">25</u></p>
<p style="top:531.50px"><b style="right:306.9px">41</b><span style="left:32.9px">Thailand</span><span style="right:97.2px">36.9</span><u class="UM" style="left:247.7px">5</u><u class="SEAO" style="left:293.5px">9</u></p>
<p style="top:543.81px"><b style="right:306.9px">42</b><span style="left:32.9px">Latvia</span><span style="right:97.2px">36.4</span><u class="HI" style="left:247.7px">36</u><u class="EUR" style="left:293.5px">26</u></p>
</div>
<div class="bt" style="left:1485px;top:245px;width:12.600px;height:554.900px;overflow:hidden">
<b class="bh" style="left:0;top:13.600px">GII</b><b class="bh" style="left:0;top:24px">rank</b>
<i class="hl" style="top:38.300px;height:1.500px"></i>
<p style="top:39.10px"></p>
<p style="top:51.41px"></p>
<p style="top:63.72px"></p>
<p style="top:76.03px"></p>
<p style="top:88.34px"></p>
<p style="top:100.65px"></p>
<p style="top:112.96px"></p>
<p style="top:125.27px"></p>
<p style="top:137.58px"></p>
<p style="top:149.89px"></p>
<p style="top:162.20px"></p>
<p style="top:174.51px"></p>
<p style="top:186.82px"></p>
<p style="top:199.13px"></p>
<p style="top:211.44px"></p>
<p style="top:223.75px"></p>
<p style="top:236.06px"></p>
<p style="top:248.37px"></p>
<p style="top:260.68px"></p>
<p style="top:272.99px"></p>
<p style="top:285.30px"></p>
<p style="top:297.61px"></p>
<p style="top:309.92px"></p>
<p style="top:322.23px"></p>
<p style="top:334.54px"></p>
<p style="top:346.85px"></p>
<p style="top:359.16px"></p>
<p style="top:371.47px"></p>
<p style="top:383.78px"></p>
<p style="top:396.09px"></p>
<p style="top:408.40px"></p>
<p style="top:420.71px"></p>
<p style="top:433.02px"><b style="left:8.300px">100</b></p>
<p style="top:445.33px"><b style="left:8.300px">101</b></p>
<p style="top:457.64px"><b style="left:8.300px">102</b></p>
<p style="top:469.95px"><b style="left:8.300px">103</b></p>
<p style="top:482.26px"><b style="left:8.300px">104</b></p>
<p style="top:494.57px"><b style="left:8.300px">105</b></p>
<p style="top:506.88px"><b style="left:8.300px">106</b></p>
<p style="top:519.19px"><b style="left:8.300px">107</b></p>
<p style="top:531.50px"><b style="left:8.300px">108</b></p>
<p style="top:543.81px"><b style="left:8.300px">109</b></p>
</div>
<svg style="left:1105px;top:718px" width="145" height="30" viewBox="0 0 145 30"><ellipse cx="71.300" cy="14.300" rx="65.800" ry="9.200" fill="none" stroke="#2e5590" stroke-width="1.500"/></svg>
<span style="left:435.0px;top:812.5px;font-size:12.2px;line-height:14.6px;color:#222;letter-spacing:0.36px;">https://www.wipo.int/web-publications/global-innovation-index-2024/assets/67729/2000%20Global%20Innovation%20Index%202024_WEB3lite.pdf</span>
<!-- video -->
<div style="left:1600.0px;top:0.0px;width:277.0px;height:851.0px;background:#000;"></div>
<svg style="left:1600px;top:0px;overflow:hidden" width="233" height="90.800" viewBox="0 0 233 90.800"><defs><filter id="vb" x="-5%" y="-5%" width="110%" height="110%"><feGaussianBlur stdDeviation="0.900"/></filter><filter id="vb2" x="-5%" y="-5%" width="110%" height="110%"><feGaussianBlur stdDeviation="0.500"/></filter></defs><linearGradient id="w1" x1="0" x2="1" y1="0" y2="0"><stop offset="0" stop-color="#e9e9ed"/><stop offset="0.450" stop-color="#e6e5eb"/><stop offset="1" stop-color="#e9e7ee"/></linearGradient><rect width="233" height="91" fill="url(#w1)"/><g filter="url(#vb)"><path d="M0 40h10l2 36v15h-12z" fill="#ccd0d8"/><rect x="1" y="44" width="4" height="14" fill="#8098c0"/><rect x="2" y="60" width="7" height="16" fill="#eef0f4"/><rect x="46.100" y="76.700" width="166" height="16" fill="#d8c2a2"/><rect x="46.100" y="76.700" width="166" height="2.200" fill="#e7d5b8"/><rect x="57.600" y="52.400" width="15.100" height="21.800" fill="#f3f0e6"/><rect x="59.600" y="54.600" width="11.100" height="17.500" fill="#a7abc2"/><rect x="64.800" y="54.600" width="0.800" height="17.500" fill="#cfd2de"/><rect x="75" y="66" width="15" height="9.500" fill="#e6e6e8"/><circle cx="79" cy="66.500" r="2" fill="#e2a21e"/><circle cx="83.500" cy="65.500" r="1.800" fill="#d8402e"/><circle cx="87" cy="66.500" r="1.800" fill="#e8c23c"/><circle cx="81.500" cy="69" r="1.500" fill="#3a7ac0"/><rect x="186.400" y="64.800" width="18.100" height="11.500" fill="#8db6da"/><rect x="186.400" y="64.800" width="4.500" height="11.500" fill="#b04a4a"/><rect x="191" y="64.800" width="3" height="11.500" fill="#d8dce8"/><rect x="107.200" y="1" width="9.500" height="33.300" fill="#4a2c24"/><rect x="109.200" y="3" width="7" height="29.300" fill="#b8a58e"/><path d="M91.0 87.3 C91.0 69.8 94.8 52.4 101.0 45.1 L117.2 43.0 L132.2 49.9 L145.9 49.9 L160.8 43.6 L179.6 47.6 C185.8 54.9 188.3 72.3 188.5 87.3z" fill="#22222c"/><path d="M129.1 49.3 L135.3 87.3 L143.4 87.3 L148.4 49.3z" fill="#c79d8c"/><path d="M132 40h13v12h-13z" fill="#d8a48e"/><path d="M116.6 -0.6 C112.2 7.5 110.3 24.9 112.2 37.4 C113.5 44.9 117.2 49.3 120.3 50.1 L132.2 47.4 L144.6 47.4 L154.0 50.1 C160.8 47.4 166.5 38.7 167.3 28.7 C167.7 16.2 163.3 6.2 158.1 -0.6z" fill="#4c2c23"/><ellipse cx="137.200" cy="25" rx="14" ry="20.500" fill="#e3ae97"/><path d="M119.1 21.2 C118.5 7.5 125.9 0.6 132.2 0.6 L147.1 0.0 C154.0 5.0 155.2 12.5 154.1 21.8 C150.2 13.1 142.1 7.7 130.9 5.5 C125.9 8.7 123.4 14.3 122.7 20.6z" fill="#4e2e25"/><path d="M131.500 36.800q5.500 2.600 11.500 0" stroke="#c25a6c" stroke-width="1.500" fill="none"/><path d="M126.500 18.500q3-1.500 6.500 0 M142 18.500q3.500-1.500 6.500 0" stroke="#3a2420" stroke-width="1.600" fill="none"/><path d="M136 22v8.500h3" stroke="#c98e78" stroke-width="1" fill="none"/><g stroke="#4a4a5c" stroke-width="0.500" opacity="0.700"><path d="M98 50l-5 40 M103 48l-4 42 M108 47l-2 43 M113 46l0 44 M118 46l3 44 M123 48l6 42 M150 48l-6 42 M156 46l-3 44 M162 46l0 44 M168 47l2 43 M174 48l4 42 M180 50l5 40"/></g></g></svg>
<div style="left:1608.0px;top:85.3px;width:215.0px;height:8.0px;background:rgba(35,35,35,.62);border-radius:4px 4px 0 0;"></div>
<span style="left:1613.0px;top:90.1px;font-size:13.8px;line-height:16.6px;color:#fff;letter-spacing:0.75px;text-shadow:0 0 0.300px #fff;">Dr. Figen TAŞCI DURGUT-T...</span>
<svg style="left:1600px;top:136.600px;overflow:hidden" width="233" height="131.600" viewBox="0 136.600 233 131.600"><linearGradient id="w2" x1="0" x2="1" y1="0" y2="0"><stop offset="0" stop-color="#f3ebeb"/><stop offset="0.350" stop-color="#f7f4f4"/><stop offset="1" stop-color="#f6f5f6"/></linearGradient><rect y="136" width="233" height="133" fill="url(#w2)"/><g filter="url(#vb)"><rect x="110.700" y="134" width="51.500" height="50" fill="#c7a044"/><rect x="113.600" y="136" width="45.400" height="45.500" fill="#efe5cc"/><rect x="119.700" y="136.500" width="33.800" height="40" fill="#806876"/><path d="M124 176.500v-18c1-6 5-9.500 9-10.500h6c5 1 9 4.500 10 10.500v18z" fill="#4d3c52"/><ellipse cx="136.500" cy="145" rx="4" ry="5" fill="#b29a98"/><path d="M134.500 151l2 12 2-12z" fill="#c8b8b8"/><path d="M65.4 271.4 L65.4 225.8 C65.4 221.8 67.7 220.3 71.7 220.3 L133.9 220.3 C137.8 220.3 140.2 222.3 140.2 225.8 L140.2 271.4z" fill="#c12f38"/><path d="M63.0 271.4 C64.6 258.8 69.3 249.4 77.2 244.7 L97.6 238.4 L129.1 239.9 L148.0 246.2 C152.8 252.5 155.1 262.0 155.9 271.4z" fill="#b48c66"/><linearGradient id="h2" x1="0" x2="0" y1="0" y2="1"><stop offset="0" stop-color="#553a2c"/><stop offset="0.550" stop-color="#6e4e3a"/><stop offset="1" stop-color="#a07e5c"/></linearGradient><path d="M108.7 191.4 C96.1 191.9 87.4 202.1 85.8 214.7 C84.3 227.3 81.9 236.8 75.6 246.2 C71.7 252.5 69.3 260.4 67.7 269.9 L141.7 269.9 C138.6 260.4 133.1 252.5 133.5 244.7 C135.7 230.5 133.9 214.7 128.3 203.7 C124.4 195.8 117.3 191.4 108.7 191.4z" fill="url(#h2)"/><path d="M100.8 246.2 L103.9 271.4 L119.7 271.4 L120.5 247.8z" fill="#c6d4e4"/><path d="M90.6 217.9 C91.3 208.4 97.6 203.7 105.5 204.0 C114.2 204.5 118.9 211.6 118.4 224.2 C118.1 235.2 112.6 243.9 103.9 244.7 C96.9 244.7 92.9 238.4 91.3 230.5z" fill="#d9a287"/><path d="M108.7 191.4 C97.6 192.7 89.8 202.1 88.2 217.9 C94.5 206.9 102.4 202.9 110.2 202.1z" fill="#5a3c2e"/><path d="M118 250c4 4 8 8 10 18 M80 246c-4 6-7 12-8 22" stroke="#a88868" stroke-width="2.500" fill="none" opacity="0.700"/><rect x="89.500" y="216.500" width="11.500" height="7.800" rx="2.200" fill="rgba(255,255,255,.18)" stroke="#2a2424" stroke-width="1.500"/><rect x="103.500" y="216" width="11.500" height="7.800" rx="2.200" fill="rgba(255,255,255,.18)" stroke="#2a2424" stroke-width="1.500"/><path d="M115 218l8 1" stroke="#2a2424" stroke-width="1.200"/><path d="M95.500 236q4.500 3.500 10 0.500" stroke="#8a3a38" stroke-width="1.600" fill="none"/><path d="M96.500 236.500q4 1.200 8 0" stroke="#f4eeee" stroke-width="0.800" fill="none"/><rect x="0" y="259.600" width="42.500" height="10" fill="#a3483a"/><path d="M2 252l2 10h20l3-10z" fill="#e4d6d8" opacity="0.900"/><rect x="8" y="246" width="3.200" height="10" fill="#ea5a22" transform="rotate(-12 9 251)"/><rect x="13" y="243" width="2.800" height="12" fill="#c22e56" transform="rotate(6 14 249)"/><rect x="18" y="241" width="2.500" height="13" fill="#7a3048" transform="rotate(14 19 247)"/><rect x="4" y="247" width="2.500" height="8" fill="#3a3a3a" transform="rotate(-20 5 251)"/></g></svg>
<div style="left:1608.0px;top:262.7px;width:215.0px;height:8.0px;background:rgba(35,35,35,.62);border-radius:4px 4px 0 0;"></div>
<span style="left:1613.0px;top:267.5px;font-size:13.8px;line-height:16.6px;color:#fff;letter-spacing:0.41px;text-shadow:0 0 0.300px #fff;">Esra CER YARDIMOĞLU_TÜ...</span>
<svg style="left:1600px;top:314px;overflow:hidden" width="233" height="131.800" viewBox="0 314 233 131.800"><rect y="313" width="233" height="134" fill="#f2f2f5"/><g filter="url(#vb)"><rect x="0" y="313" width="121" height="46" fill="#e2e6e9"/><rect x="0" y="313" width="121" height="5.500" fill="#f1f3f4"/><rect x="0" y="318.500" width="121" height="1" fill="#cfd3d6"/><rect x="0" y="355.500" width="79" height="53" fill="#4a3531"/><rect x="0" y="343" width="1.200" height="14" fill="#2a2422"/><rect x="6.5" y="358.0" width="14.0" height="13.0" fill="#251b1b"/><rect x="22.5" y="358.0" width="26.0" height="13.0" fill="#251b1b"/><rect x="51.0" y="358.0" width="12.0" height="13.0" fill="#251b1b"/><rect x="6.5" y="373.0" width="14.0" height="11.0" fill="#251b1b"/><rect x="22.5" y="373.0" width="26.0" height="11.0" fill="#251b1b"/><rect x="51.0" y="373.0" width="12.0" height="11.0" fill="#251b1b"/><rect x="66.0" y="360.0" width="10.0" height="11.0" fill="#251b1b"/><rect x="22.0" y="388.0" width="13.0" height="17.0" fill="#251b1b"/><rect x="37.0" y="388.0" width="13.0" height="17.0" fill="#251b1b"/><rect x="52.0" y="388.0" width="9.0" height="14.0" fill="#251b1b"/><ellipse cx="35.500" cy="365" rx="5" ry="4.300" fill="#d9dde0"/><ellipse cx="35.500" cy="365" rx="3" ry="2.600" fill="#b9b29a"/><rect x="11" y="363" width="9.500" height="6" fill="#dcdedb"/><rect x="55" y="367" width="6" height="3" fill="#5a8ad0"/><rect x="43" y="360" width="2" height="9" fill="#b03040"/><rect x="45.500" y="360" width="2" height="9" fill="#3a5ab0"/><ellipse cx="17" cy="381" rx="3" ry="3" fill="#4a7a5a"/><ellipse cx="31" cy="379" rx="4" ry="2.500" fill="#8aa0a8"/><ellipse cx="43" cy="381.500" rx="3" ry="2" fill="#c8c8c8"/><path d="M3 398c0-6 3-10 5.500-10s5.500 4 5.500 10v8h-11z" fill="#b9bcc4"/><rect x="3" y="405" width="11" height="3" fill="#c9a030"/><circle cx="19" cy="402.500" r="2.500" fill="#e8e8e8"/><circle cx="19" cy="402.500" r="1.200" fill="#c04030"/><ellipse cx="44" cy="401" rx="5" ry="6" fill="#3a2a22"/><rect x="77.500" y="346" width="30" height="44" fill="#2c2624"/><rect x="79.800" y="348.300" width="25.400" height="42" fill="#cbbba4"/><rect x="0" y="407.500" width="62" height="40" fill="#3b3332"/><path d="M0 409.500l23-0.500-6 8-17 2z" fill="#f0f0f0"/><path d="M24 409.500l22-0.500-2 5-24 1z" fill="#e8e8e8"/><rect x="120.500" y="313" width="3" height="100" fill="#e6e6ec"/><path d="M126 358v51 M121.500 360.500l4.500 3.500 4.500-3.500 M122.500 358.500v3 M129.500 358.500v3 M122 409h8" stroke="#3c2c2a" stroke-width="1.700" fill="none"/><path d="M147.7 314.3 L151.2 317.7 L157.5 344.5 L163.0 379.1 L164.6 413.8 L131.5 428.7 L127.2 415.4 C129.9 394.9 133.9 372.8 138.6 352.4 C141.7 338.2 144.9 325.6 147.7 314.3z" fill="#d0212c"/><path d="M131 428.500l33-15" stroke="#c9a24a" stroke-width="1.600" fill="none"/><circle cx="146.500" cy="354" r="7.500" fill="#f4eeee"/><circle cx="143.500" cy="352.500" r="6.500" fill="#d0212c"/><path d="M141.500 370.500l1.800 3.800 4.200 0.500-3 2.800 0.800 4.200-3.800-2.100-3.800 2.100 0.800-4.200-3-2.800 4.200-0.500z" fill="#f4eeee"/><rect x="147" y="424" width="1.500" height="23" fill="#b4b4b4"/><path d="M173.400 313h33.200v24.300l-33.200 9z" fill="#c59a3a"/><path d="M176.300 313h27.500v21.500l-27.500 7.500z" fill="#5e2a24"/><path d="M180 313h20v14l-20 5z" fill="#a8383e"/><path d="M186 316l8 0 2 12-12 2z" fill="#d8c8c0" opacity="0.500"/><path d="M206 313h28v134h-50c3-28 7-58 12-86 3-18 6-34 10-48z" fill="#f7f7fa"/><path d="M189 392c6 14 18 23 34 23 4 0 8-0.500 11-1.500" fill="none" stroke="#2a4aa8" stroke-width="1.600"/><ellipse cx="222" cy="357" rx="30" ry="37" fill="#2c4eae"/><g fill="none" stroke="#f2f4fa" stroke-width="1.700"><ellipse cx="211.500" cy="343" rx="6" ry="16"/><ellipse cx="211.500" cy="374" rx="6" ry="16"/><ellipse cx="199" cy="358.500" rx="6" ry="14" transform="rotate(90 199 358.500)"/><ellipse cx="225" cy="358.500" rx="6" ry="14" transform="rotate(90 225 358.500)"/><ellipse cx="202" cy="347.500" rx="6" ry="15" transform="rotate(-42 202 347.500)"/><ellipse cx="221" cy="369.500" rx="6" ry="15" transform="rotate(-42 221 369.500)"/><ellipse cx="221" cy="347.500" rx="6" ry="15" transform="rotate(42 221 347.500)"/><ellipse cx="202" cy="369.500" rx="6" ry="15" transform="rotate(42 202 369.500)"/></g><circle cx="211.500" cy="358.500" r="4.500" fill="#2c4eae"/><path d="M212 313l8 6h13v-6z" fill="#2c4eae" opacity="0.850"/><path d="M18.9 448.4 C23.6 432.7 34.6 420.1 47.2 416.1 L70.9 413.8 L110.2 415.4 L122.8 417.7 C129.1 426.4 132.3 437.4 133.1 448.4z" fill="#a9d1f1"/><path d="M64.6 423.2 C74.0 432.7 97.6 432.7 108.7 423.2 L110.2 448.4 L63.0 448.4z" fill="#86c0f0"/><path d="M64 424q24 22 46 0 M66 430q22 20 42 0" stroke="#e4e6ee" stroke-width="2" fill="none" stroke-dasharray="1.600 1"/><path d="M88.2 362.8 C75.6 363.1 67.7 371.3 64.6 382.3 C59.8 391.7 50.4 401.2 47.2 413.8 C44.9 423.2 47.2 431.1 52.8 433.5 L66.1 423.2 L108.7 423.2 L111.0 430.3 C119.7 426.4 123.6 416.9 120.5 407.5 C117.3 398.0 115.7 387.0 110.2 377.6 C105.5 368.1 97.6 362.8 88.2 362.8z" fill="#5a3028"/><path d="M66.9 394.9 C66.1 382.3 75.6 373.6 88.2 373.6 C100.8 373.6 110.2 382.3 110.2 396.5 C110.2 410.6 102.4 425.6 89.8 426.7 C77.2 426.7 67.7 410.6 66.9 394.9z" fill="#d29a80"/><path d="M66.1 391.7 C67.7 379.1 77.2 371.6 88.2 371.6 C100.8 371.6 109.4 379.1 111.0 391.7 C105.5 382.3 96.1 376.8 85.0 376.8 C77.2 377.6 70.1 383.1 66.1 391.7z" fill="#5a3028"/><rect x="72" y="390.500" width="16" height="11.500" rx="4" fill="rgba(255,255,255,.12)" stroke="#2a1a1a" stroke-width="1.900"/><rect x="92" y="391.500" width="16" height="11.500" rx="4" fill="rgba(255,255,255,.12)" stroke="#2a1a1a" stroke-width="1.900"/><path d="M88 395h4" stroke="#2a1a1a" stroke-width="1.500"/><path d="M80 413.500q9 1.500 17 0" stroke="#8a4a42" stroke-width="1.500" fill="none"/><path d="M88 400v8" stroke="#b87e68" stroke-width="1.200"/></g></svg>
<span style="left:1793px;top:395px;font-size:8.500px;line-height:10px;font-weight:bold;color:#2a4aa8;letter-spacing:0.300px;transform:rotate(193deg);transform-origin:50% 50%">RSİTESİ</span>
<div style="left:1608.0px;top:440.3px;width:215.0px;height:8.0px;background:rgba(35,35,35,.62);border-radius:4px 4px 0 0;"></div>
<span style="left:1613.0px;top:445.1px;font-size:13.8px;line-height:16.6px;color:#fff;letter-spacing:0.69px;text-shadow:0 0 0.300px #fff;">Prof. Dr. Funda ERYILMAZ ...</span>
<svg style="left:1600px;top:492px;overflow:hidden" width="233" height="131.800" viewBox="0 492 233 131.800"><linearGradient id="bl4" x1="0" x2="0" y1="0" y2="1"><stop offset="0" stop-color="#aeb0ae"/><stop offset="0.350" stop-color="#b4b4b2"/><stop offset="1" stop-color="#bdbcba"/></linearGradient><rect y="491" width="233" height="134" fill="url(#bl4)"/><g filter="url(#vb)"><rect x="46" y="493.0" width="178" height="1" fill="#d8d7d5" opacity="0.45"/><rect x="46" y="495.5" width="178" height="1" fill="#d8d7d5" opacity="0.45"/><rect x="46" y="498.0" width="178" height="1" fill="#d8d7d5" opacity="0.45"/><rect x="46" y="500.5" width="178" height="1" fill="#d8d7d5" opacity="0.45"/><rect x="46" y="503.0" width="178" height="1" fill="#d8d7d5" opacity="0.45"/><rect x="46" y="505.5" width="178" height="1" fill="#d8d7d5" opacity="0.45"/><rect x="46" y="508.0" width="178" height="1" fill="#d8d7d5" opacity="0.45"/><rect x="46" y="510.5" width="178" height="1" fill="#d8d7d5" opacity="0.45"/><rect x="46" y="513.0" width="178" height="1" fill="#d8d7d5" opacity="0.45"/><rect x="46" y="515.5" width="178" height="1" fill="#d8d7d5" opacity="0.45"/><rect x="46" y="518.0" width="178" height="1" fill="#d8d7d5" opacity="0.45"/><rect x="46" y="520.5" width="178" height="1" fill="#d8d7d5" opacity="0.45"/><rect x="46" y="523.0" width="178" height="1" fill="#d8d7d5" opacity="0.45"/><rect x="46" y="525.5" width="178" height="1" fill="#d8d7d5" opacity="0.45"/><rect x="46" y="528.0" width="178" height="1" fill="#d8d7d5" opacity="0.90"/><rect x="46" y="530.5" width="178" height="1" fill="#d8d7d5" opacity="0.90"/><rect x="46" y="533.0" width="178" height="1" fill="#d8d7d5" opacity="0.90"/><rect x="46" y="535.5" width="178" height="1" fill="#d8d7d5" opacity="0.90"/><rect x="46" y="538.0" width="178" height="1" fill="#d8d7d5" opacity="0.90"/><rect x="46" y="540.5" width="178" height="1" fill="#d8d7d5" opacity="0.90"/><rect x="46" y="543.0" width="178" height="1" fill="#d8d7d5" opacity="0.90"/><rect x="46" y="545.5" width="178" height="1" fill="#d8d7d5" opacity="0.90"/><rect x="46" y="548.0" width="178" height="1" fill="#d8d7d5" opacity="0.90"/><rect x="46" y="550.5" width="178" height="1" fill="#d8d7d5" opacity="0.90"/><rect x="46" y="553.0" width="178" height="1" fill="#d8d7d5" opacity="0.90"/><rect x="46" y="555.5" width="178" height="1" fill="#d8d7d5" opacity="0.90"/><rect x="46" y="558.0" width="178" height="1" fill="#d8d7d5" opacity="0.90"/><rect x="46" y="560.5" width="178" height="1" fill="#d8d7d5" opacity="0.90"/><rect x="46" y="563.0" width="178" height="1" fill="#d8d7d5" opacity="0.90"/><rect x="46" y="565.5" width="178" height="1" fill="#d8d7d5" opacity="0.90"/><rect x="46" y="568.0" width="178" height="1" fill="#d8d7d5" opacity="0.90"/><rect x="46" y="570.5" width="178" height="1" fill="#d8d7d5" opacity="0.90"/><rect x="46" y="573.0" width="178" height="1" fill="#d8d7d5" opacity="0.90"/><rect x="46" y="575.5" width="178" height="1" fill="#d8d7d5" opacity="0.90"/><rect x="46" y="578.0" width="178" height="1" fill="#d8d7d5" opacity="0.90"/><rect x="46" y="580.5" width="178" height="1" fill="#d8d7d5" opacity="0.90"/><rect x="46" y="583.0" width="178" height="1" fill="#d8d7d5" opacity="0.90"/><rect x="46" y="585.5" width="178" height="1" fill="#d8d7d5" opacity="0.90"/><rect x="46" y="588.0" width="178" height="1" fill="#d8d7d5" opacity="0.90"/><rect x="46" y="590.5" width="178" height="1" fill="#d8d7d5" opacity="0.90"/><rect x="46" y="593.0" width="178" height="1" fill="#d8d7d5" opacity="0.90"/><rect x="46" y="595.5" width="178" height="1" fill="#d8d7d5" opacity="0.90"/><rect x="46" y="598.0" width="178" height="1" fill="#d8d7d5" opacity="0.90"/><rect x="46" y="600.5" width="178" height="1" fill="#d8d7d5" opacity="0.90"/><path d="M45.700 527.500l177-22v3l-177 22z" fill="#d2d2d0"/><path d="M45.700 498l177-6" stroke="#c8c8c6" stroke-width="1.200"/><rect x="132" y="538" width="26" height="28" fill="#d6d6d4" opacity="0.750"/><rect x="0" y="491" width="45.700" height="134" fill="#e8e2d6"/><path d="M0 491h45.700v7l-38 6h-7.700z" fill="#d9d5cc"/><rect x="6" y="503" width="1" height="110" fill="#d4cdc0"/><rect x="21.300" y="530.400" width="20.400" height="90" fill="#eee8de" stroke="#d2cabd" stroke-width="0.800"/><rect x="35" y="575.500" width="5" height="1.400" fill="#8a8a88"/><path d="M0 567c4 0 7 6 7 14s-3 16-7 16z" fill="#5d8292"/><path d="M0 604l20 8 25 4v9h-45z" fill="#b7977a"/><rect x="43.500" y="491" width="3" height="134" fill="#c9c9c7"/><rect x="223.600" y="491" width="10" height="134" fill="#d9d5cd"/><path d="M92.100 500.500l29.900-4.500v43h-29.900z" fill="#33201a"/><path d="M93.600 502l26.900-4v39.500h-26.900z" fill="none" stroke="#a8843c" stroke-width="0.700"/><path d="M95.500 503.500l23-3.500v35.500h-23z" fill="#2c2b2d"/><ellipse cx="105.800" cy="519" rx="5.800" ry="7.800" fill="#bfa796"/><path d="M100 514c1-5 4-7.500 7-7.500s5.500 2 6 6c-2-2-4-3-6.500-3s-5 1.500-6.500 4.500z" fill="#3a3430"/><path d="M97 535.500c1-6 4-8.500 8.500-8.500s8.500 3 10 8.500z" fill="#121214"/><path d="M104 527l2 7 2.200-7z" fill="#e6e6e6"/><path d="M57.5 519.0 C60.6 527.2 61.7 538.2 62.4 561.9 L53.5 565.0 C52.8 579.2 50.4 594.9 47.2 605.2 L41.7 608.3 C42.5 591.8 44.1 572.9 44.9 561.9 C45.7 546.1 52.0 530.4 57.5 519.0z" fill="#cf1f2c"/><circle cx="52.300" cy="548" r="6" fill="#f3ecec"/><circle cx="54.600" cy="548.500" r="5" fill="#cf1f2c"/><path d="M50.500 559l1.200 2.800 3 0.300-2.300 2 0.700 3-2.600-1.600-2.600 1.600 0.700-3-2.300-2 3-0.300z" fill="#f3ecec"/><rect x="45.500" y="539" width="6" height="26" fill="#f1eaea" opacity="0.550"/><rect x="49.600" y="564.200" width="44" height="61" fill="#c8925e"/><rect x="49.600" y="564.200" width="44" height="3.500" fill="#d9a774"/><rect x="54.300" y="570" width="15" height="56" fill="#2a2320"/><rect x="72.500" y="570" width="14.500" height="56" fill="#2a2320"/><path d="M107 541v25" stroke="#d8d8d8" stroke-width="1.200"/><path d="M103.500 543.500c-3 3-5 8-5.500 13.500l5.500-4z" fill="#cf1f2c"/><path d="M109.500 543.500c3 4 5 9 5.500 15l-6-5z" fill="#eceef4"/><circle cx="111.800" cy="551.500" r="1.700" fill="#2c4eae"/><path d="M206.3 493.4 C211.8 506.7 220.5 538.2 224.4 561.9 C228.3 585.5 230.7 604.4 233.1 626.4 L204.7 626.4 C201.6 610.7 196.9 594.9 194.5 583.9 C185.8 569.7 185.0 557.1 189.0 549.3 C195.3 531.9 201.6 511.5 206.3 493.4z" fill="#f3f3f5"/><circle cx="209.400" cy="562" r="18.300" fill="#f8f8fb" stroke="#2a4aa8" stroke-width="1.300"/><circle cx="211" cy="562.500" r="12.500" fill="#2c4eae"/><g fill="none" stroke="#f4f6fb" stroke-width="1.100"><ellipse cx="211" cy="562.500" rx="3.200" ry="10"/><ellipse cx="211" cy="562.500" rx="10" ry="3.200"/><ellipse cx="211" cy="562.500" rx="3.200" ry="10" transform="rotate(45 211 562.500)"/><ellipse cx="211" cy="562.500" rx="3.200" ry="10" transform="rotate(-45 211 562.500)"/></g><circle cx="211" cy="562.500" r="2" fill="#2c4eae"/><path d="M126.0 626.4 L126.8 569.7 C126.8 566.3 129.1 564.7 133.1 564.7 L190.6 564.7 C195.0 564.7 196.9 566.6 196.9 570.5 L198.7 626.4z" fill="#1b1a19"/><path d="M150 572c10-3 30-4 42 0" stroke="#2e2c2a" stroke-width="2" fill="none"/><path d="M66.1 626.4 C69.3 613.8 75.6 604.4 85.0 600.4 L97.6 598.1 L126.0 596.5 C141.7 599.7 155.9 607.5 165.4 626.4z" fill="#1a1a28"/><linearGradient id="f4" x1="0" x2="0" y1="0" y2="1"><stop offset="0" stop-color="#c9a18b"/><stop offset="0.550" stop-color="#ad7d66"/><stop offset="1" stop-color="#7a5445"/></linearGradient><path d="M88.5 583.9 C90.6 572.9 100.8 568.2 110.2 569.0 C121.3 569.7 128.3 577.6 127.9 591.8 C127.2 607.5 121.3 621.7 110.2 624.9 C99.2 624.9 91.3 610.7 89.4 598.1z" fill="url(#f4)"/><path d="M87.4 587.1 C85.8 572.9 94.5 561.1 108.7 560.8 C122.8 561.1 130.7 569.7 129.9 585.5 C126.0 576.0 118.1 571.3 108.7 571.3 C99.2 571.6 92.1 576.8 87.4 587.1z" fill="#cfcdca"/><path d="M96.500 598.500q4-1.500 8 0 M112 597.500q4-1.500 8 0" stroke="#3a2620" stroke-width="1.400" fill="none"/><path d="M108 600v10" stroke="#8e6350" stroke-width="1.300"/><path d="M102 617q7 2.500 14 0" stroke="#5a3a30" stroke-width="1.600" fill="none"/></g></svg>
<div style="left:1608.0px;top:618.3px;width:143.8px;height:8.0px;background:rgba(35,35,35,.62);border-radius:4px 4px 0 0;"></div>
<span style="left:1613.0px;top:623.1px;font-size:13.8px;line-height:16.6px;color:#fff;letter-spacing:0.72px;text-shadow:0 0 0.300px #fff;">Ali Faruk AÇIKGÖZ</span>
<svg style="left:1600px;top:670px;overflow:hidden" width="233" height="131.400" viewBox="0 670 233 131.400"><linearGradient id="w5" x1="0" x2="1" y1="0" y2="0.300"><stop offset="0" stop-color="#ebe5dd"/><stop offset="0.550" stop-color="#e9e1da"/><stop offset="1" stop-color="#e2d7d2"/></linearGradient><rect y="669" width="233" height="134" fill="url(#w5)"/><g filter="url(#vb)"><path d="M113.4 669.5 C117.3 678.4 122.0 691.0 125.2 705.2 L125.5 717.0 L108.7 716.2 C107.1 706.8 107.9 687.9 113.4 669.5z" fill="#d3282b"/><path d="M108.500 708.500l17-4.500v6.500l-16.500 3.500z" fill="#f3e9e6"/><path d="M133.1 669.5 C138.6 681.6 142.5 698.9 144.1 721.0 L126.0 721.8 C125.2 703.6 127.6 684.7 133.1 669.5z" fill="#f8f6f3"/><ellipse cx="135.400" cy="714" rx="8.500" ry="5.200" fill="#f8f6f3" stroke="#dfa03c" stroke-width="1.100"/><path d="M129.500 714.500q6-4.500 12 0" stroke="#2f6fc0" stroke-width="1.800" fill="none"/><rect x="219.700" y="668" width="15" height="22.300" fill="#cfa53c"/><rect x="222.500" y="668" width="12" height="19" fill="#e9dcc6"/><path d="M226 672h8v12h-8z" fill="#c25a4a"/><path d="M228 676h6v8h-6z" fill="#e8b8a0"/><rect x="173.500" y="760" width="7" height="5.500" fill="#f5f3f1" stroke="#cfc8c4" stroke-width="0.500"/><rect x="181.500" y="764" width="6" height="5.500" fill="#f5f3f1" stroke="#cfc8c4" stroke-width="0.500"/><path d="M185 769.500c1 8 3 16 7 26" stroke="#d6ccc8" stroke-width="0.800" fill="none"/><rect x="141.500" y="750" width="10" height="5.500" fill="#d9a23c"/><path d="M126.8 723.3 C126.8 721.8 128.3 721.3 130.7 721.3 L148.8 721.3 C151.2 721.3 152.0 722.5 152.4 724.9 L156.2 748.5 C156.2 750.9 155.1 751.7 152.8 751.7 L129.1 751.7 C126.8 751.7 126.0 750.1 126.0 747.7z" fill="#282a2c"/><path d="M127.500 735h27 M128 743h28" stroke="#1a1c1e" stroke-width="1"/><path d="M145.7 760.3 C145.7 757.5 148.0 756.4 151.2 756.4 L162.2 756.9 C166.1 757.2 167.7 759.6 167.7 763.5 L167.2 804.4 L146.5 804.4z" fill="#232527"/><path d="M148 772h19 M148 786h19" stroke="#17191b" stroke-width="1"/><path d="M0.0 788.7 L52.0 779.2 L74.0 804.4 L0.0 804.4z" fill="#c9a474"/><path d="M0 772.500l24-3.500 1.500 14-25.500 6z" fill="#f2f0ee"/><path d="M2 776l17-2.500" stroke="#c03030" stroke-width="1.500"/><path d="M11 778l9-1.200" stroke="#2a2a2a" stroke-width="1.500"/><path d="M25.500 771l24-3 3 11-26 6z" fill="#cfc0ae"/><path d="M45.7 804.4 L47.2 788.7 L52.8 779.2 C58.3 788.7 69.3 795.0 74.0 804.4z" fill="#b98f6b"/><path d="M52.0 779.2 C56.7 766.6 67.7 757.2 78.7 752.5 L94.5 749.3 L126.0 750.9 L141.7 757.2 C149.6 766.6 153.5 779.2 155.1 804.4 L63.0 804.4 C63.0 795.0 58.3 788.7 52.0 779.2z" fill="#2a2c30"/><circle cx="102.500" cy="775" r="0.800" fill="#3a6ab0"/><path d="M92.1 734.4 C96.1 732.0 100.8 733.6 107.1 738.3 C113.4 742.2 118.1 746.2 120.5 748.5 C116.5 757.2 110.2 765.1 102.4 767.4 C96.1 768.2 90.6 764.3 89.0 757.2 C85.8 750.9 87.4 739.9 92.1 734.4z" fill="#c99b7d"/><path d="M92.1 735.1 C91.3 722.5 100.8 714.7 111.8 715.0 C122.8 715.5 128.3 724.1 127.2 736.7 C126.8 743.0 124.4 747.7 120.5 748.5 C115.0 743.0 107.1 738.3 100.8 734.4 C97.6 732.8 94.5 733.3 92.1 735.1z" fill="#5d554d"/><path d="M95 728c6-6 16-8 24-4" stroke="#7a726a" stroke-width="3" fill="none" opacity="0.600"/><path d="M83.500 736.500l4.500-3 20.500 21 11-7" stroke="#2a2220" stroke-width="1.300" fill="none"/><path d="M93 762q5 3.500 11 0.500" stroke="#6a5444" stroke-width="2.200" fill="none"/></g></svg>
<div style="left:1608.0px;top:795.9px;width:137.2px;height:8.0px;background:rgba(35,35,35,.62);border-radius:4px 4px 0 0;"></div>
<span style="left:1613.0px;top:800.7px;font-size:13.8px;line-height:16.6px;color:#fff;letter-spacing:0.49px;text-shadow:0 0 0.300px #fff;">TARIK YERLİKAYA</span>
</div></body></html>
